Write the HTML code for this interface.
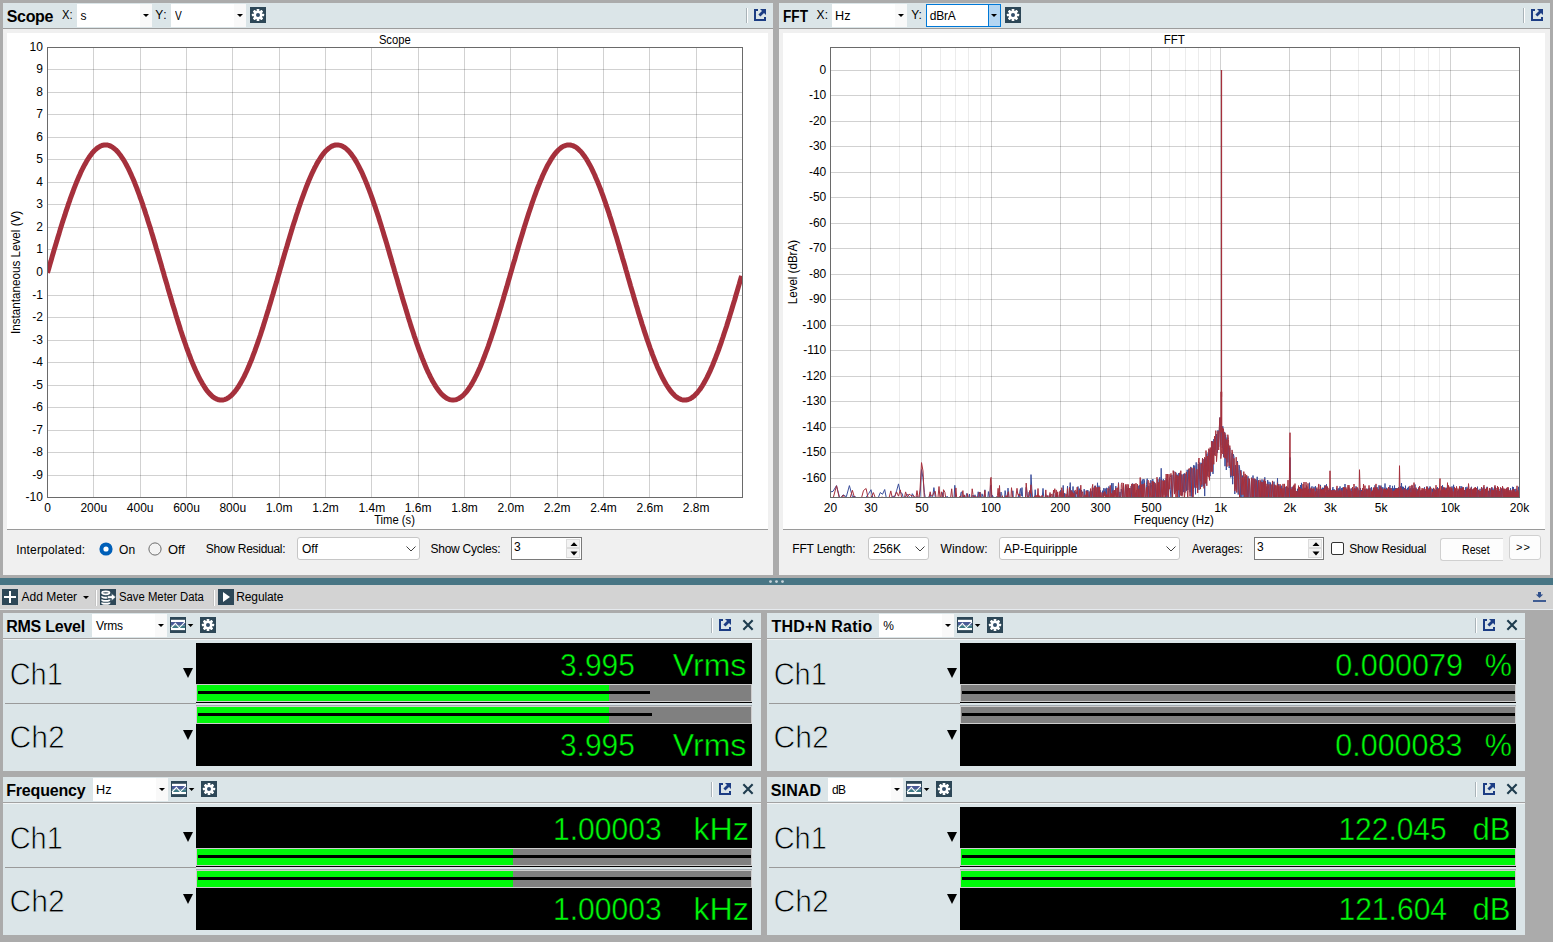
<!DOCTYPE html>
<html><head><meta charset="utf-8"><title>APx</title>
<style>
html,body{margin:0;padding:0;}
body{width:1553px;height:942px;overflow:hidden;background:#ababab;position:relative;font-family:"Liberation Sans", sans-serif;font-size:12px;color:#000;}
.a{position:absolute;}
.t{position:absolute;white-space:nowrap;line-height:1;}
.hd{background:#dbe5e8;}
.b{font-weight:bold;font-size:15px;}
.cb{position:absolute;background:#fff;}
.cb i{position:absolute;right:0;top:0;bottom:0;width:12px;background:#f9f9f9;}
.cb b{position:absolute;right:3.5px;top:50%;margin-top:-1.5px;width:0;height:0;border-left:3px solid transparent;border-right:3px solid transparent;border-top:3.4px solid #000;}
.cb span{position:absolute;left:5px;top:50%;margin-top:-6px;line-height:1;font-size:12px;}
.w10{position:absolute;background:#fff;border:1px solid #c6c6c6;border-radius:3px;box-sizing:border-box;}
.w10 span{position:absolute;left:4px;top:4px;line-height:1;font-size:12px;}
.sp{position:absolute;background:#fff;border:1px solid #7a7a7a;box-sizing:border-box;}
.sp span{position:absolute;left:2px;top:3px;line-height:1;font-size:12px;}
.sep{position:absolute;width:1px;background:#a9b3b8;box-shadow:1px 0 0 #fff;}
svg{position:absolute;left:0;top:0;overflow:visible;}
</style></head><body>

<div class="a" style="left:3px;top:3px;width:770px;height:25px;background:#dbe5e8;"></div>
<div class="a" style="left:3px;top:28px;width:770px;height:1px;background:#9c9c9c;"></div>
<div class="a" style="left:3px;top:29px;width:770px;height:546px;background:#f0f0f0;"></div>
<div class="a" style="left:7px;top:33px;width:761px;height:496px;background:#fff;"></div>
<div class="a" style="left:7px;top:529px;width:761px;height:1px;background:#9a9a9a;"></div>
<div class="a" style="left:779px;top:3px;width:771px;height:25px;background:#dbe5e8;"></div>
<div class="a" style="left:779px;top:28px;width:771px;height:1px;background:#9c9c9c;"></div>
<div class="a" style="left:779px;top:29px;width:771px;height:546px;background:#f0f0f0;"></div>
<div class="a" style="left:783px;top:33px;width:762px;height:496px;background:#fff;"></div>
<div class="a" style="left:783px;top:529px;width:762px;height:1px;background:#9a9a9a;"></div>
<div class="t" style="left:6.76px;top:8.7px;font-size:16px;letter-spacing:-0.335px;font-weight:bold;">Scope</div>
<div class="t" style="left:61.65px;top:9px;font-size:12px;transform-origin:0 0;transform:scaleX(0.9309);">X:</div>
<div class="cb" style="left:77px;top:4px;width:75px;height:23px;"><i></i><b></b></div>
<div class="t" style="left:80.47px;top:10px;font-size:12px;letter-spacing:-0.050px;">s</div>
<div class="t" style="left:155.36px;top:9px;font-size:12px;letter-spacing:0.440px;">Y:</div>
<div class="cb" style="left:171px;top:4px;width:75px;height:23px;"><i></i><b></b></div>
<div class="t" style="left:175.27px;top:10px;font-size:12px;transform-origin:0 0;transform:scaleX(0.8460);">V</div>
<svg style="left:250px;top:7px" width="16" height="16" viewBox="0 0 16 16"><rect width="16" height="16" fill="#2d4757"/><g transform="translate(8 8)" fill="#fff"><circle r="4.3"/><rect x="-1.35" y="-6.1" width="2.7" height="3.4" rx="0.5" transform="rotate(0)"/><rect x="-1.35" y="-6.1" width="2.7" height="3.4" rx="0.5" transform="rotate(45)"/><rect x="-1.35" y="-6.1" width="2.7" height="3.4" rx="0.5" transform="rotate(90)"/><rect x="-1.35" y="-6.1" width="2.7" height="3.4" rx="0.5" transform="rotate(135)"/><rect x="-1.35" y="-6.1" width="2.7" height="3.4" rx="0.5" transform="rotate(180)"/><rect x="-1.35" y="-6.1" width="2.7" height="3.4" rx="0.5" transform="rotate(225)"/><rect x="-1.35" y="-6.1" width="2.7" height="3.4" rx="0.5" transform="rotate(270)"/><rect x="-1.35" y="-6.1" width="2.7" height="3.4" rx="0.5" transform="rotate(315)"/><circle r="2.0" fill="#34506c"/></g></svg>
<div class="sep" style="left:746px;top:8px;height:15px"></div>
<svg style="left:754px;top:9px" width="12" height="12" viewBox="0 0 12 12"><path d="M0 0H4V2H2V10H10V8H12V12H0Z" fill="#1c3d84"/><path d="M6 0H12V6L10 4L6.4 7.6L4.4 5.6L8 2Z" fill="#1c3d84"/></svg>
<div class="t" style="left:783.01px;top:8.7px;font-size:16px;transform-origin:0 0;transform:scaleX(0.8523);font-weight:bold;">FFT</div>
<div class="t" style="left:816.53px;top:9px;font-size:12px;letter-spacing:0.110px;">X:</div>
<div class="cb" style="left:832px;top:4px;width:75px;height:23px;"><i></i><b></b></div>
<div class="t" style="left:835.48px;top:10px;font-size:12px;transform-origin:0 0;transform:scaleX(1.0578);">Hz</div>
<div class="t" style="left:911.16px;top:9px;font-size:12px;letter-spacing:-0.060px;">Y:</div>
<div class="cb" style="left:926px;top:4px;width:75px;height:23px;box-sizing:border-box;border:1px solid #0078d7;"><i style="background:#b4d6f2;border-left:1px solid #0078d7;width:11px"></i><b style="right:2.6px"></b></div>
<div class="t" style="left:929.82px;top:10px;font-size:12px;letter-spacing:-0.220px;">dBrA</div>
<svg style="left:1005px;top:7px" width="16" height="16" viewBox="0 0 16 16"><rect width="16" height="16" fill="#2d4757"/><g transform="translate(8 8)" fill="#fff"><circle r="4.3"/><rect x="-1.35" y="-6.1" width="2.7" height="3.4" rx="0.5" transform="rotate(0)"/><rect x="-1.35" y="-6.1" width="2.7" height="3.4" rx="0.5" transform="rotate(45)"/><rect x="-1.35" y="-6.1" width="2.7" height="3.4" rx="0.5" transform="rotate(90)"/><rect x="-1.35" y="-6.1" width="2.7" height="3.4" rx="0.5" transform="rotate(135)"/><rect x="-1.35" y="-6.1" width="2.7" height="3.4" rx="0.5" transform="rotate(180)"/><rect x="-1.35" y="-6.1" width="2.7" height="3.4" rx="0.5" transform="rotate(225)"/><rect x="-1.35" y="-6.1" width="2.7" height="3.4" rx="0.5" transform="rotate(270)"/><rect x="-1.35" y="-6.1" width="2.7" height="3.4" rx="0.5" transform="rotate(315)"/><circle r="2.0" fill="#34506c"/></g></svg>
<div class="sep" style="left:1523px;top:8px;height:15px"></div>
<svg style="left:1531px;top:9px" width="12" height="12" viewBox="0 0 12 12"><path d="M0 0H4V2H2V10H10V8H12V12H0Z" fill="#1c3d84"/><path d="M6 0H12V6L10 4L6.4 7.6L4.4 5.6L8 2Z" fill="#1c3d84"/></svg>
<svg width="1553" height="942" viewBox="0 0 1553 942" font-family='"Liberation Sans", sans-serif' font-size="12" fill="#000">
<path d="M93.5 47.5V497.5M140.5 47.5V497.5M186.5 47.5V497.5M232.5 47.5V497.5M279.5 47.5V497.5M325.5 47.5V497.5M371.5 47.5V497.5M418.5 47.5V497.5M464.5 47.5V497.5M510.5 47.5V497.5M557.5 47.5V497.5M603.5 47.5V497.5M649.5 47.5V497.5M696.5 47.5V497.5M47.5 69.5H742.5M47.5 92.5H742.5M47.5 114.5H742.5M47.5 137.5H742.5M47.5 159.5H742.5M47.5 182.5H742.5M47.5 204.5H742.5M47.5 227.5H742.5M47.5 249.5H742.5M47.5 272.5H742.5M47.5 295.5H742.5M47.5 317.5H742.5M47.5 340.5H742.5M47.5 362.5H742.5M47.5 385.5H742.5M47.5 407.5H742.5M47.5 430.5H742.5M47.5 452.5H742.5M47.5 475.5H742.5" stroke="rgba(0,0,0,0.18)" stroke-width="1" fill="none"/>
<clipPath id="c1"><rect x="47.5" y="47.5" width="695.0" height="450.0"/></clipPath>
<polyline clip-path="url(#c1)" points="47.5,272.8 48.7,268.8 49.8,264.8 51.0,260.8 52.1,256.8 53.3,252.8 54.4,248.9 55.6,245.0 56.8,241.1 57.9,237.2 59.1,233.4 60.2,229.6 61.4,225.8 62.5,222.1 63.7,218.5 64.9,214.9 66.0,211.3 67.2,207.9 68.3,204.4 69.5,201.1 70.6,197.8 71.8,194.6 73.0,191.5 74.1,188.4 75.3,185.4 76.4,182.6 77.6,179.8 78.7,177.1 79.9,174.5 81.0,171.9 82.2,169.5 83.4,167.2 84.5,165.0 85.7,162.9 86.8,160.9 88.0,159.0 89.1,157.3 90.3,155.6 91.5,154.1 92.6,152.6 93.8,151.3 94.9,150.1 96.1,149.1 97.2,148.1 98.4,147.3 99.6,146.6 100.7,146.0 101.9,145.5 103.0,145.2 104.2,145.0 105.3,144.9 106.5,145.0 107.7,145.1 108.8,145.4 110.0,145.9 111.1,146.4 112.3,147.1 113.4,147.9 114.6,148.8 115.8,149.8 116.9,151.0 118.1,152.3 119.2,153.7 120.4,155.2 121.5,156.8 122.7,158.6 123.9,160.4 125.0,162.4 126.2,164.5 127.3,166.6 128.5,168.9 129.6,171.3 130.8,173.8 131.9,176.4 133.1,179.1 134.3,181.8 135.4,184.7 136.6,187.6 137.7,190.7 138.9,193.8 140.0,197.0 141.2,200.2 142.4,203.6 143.5,207.0 144.7,210.4 145.8,214.0 147.0,217.5 148.1,221.2 149.3,224.9 150.5,228.6 151.6,232.4 152.8,236.2 153.9,240.1 155.1,243.9 156.2,247.9 157.4,251.8 158.6,255.8 159.7,259.7 160.9,263.7 162.0,267.7 163.2,271.7 164.3,275.7 165.5,279.7 166.7,283.7 167.8,287.7 169.0,291.7 170.1,295.6 171.3,299.5 172.4,303.4 173.6,307.3 174.8,311.1 175.9,314.9 177.1,318.7 178.2,322.4 179.4,326.0 180.5,329.7 181.7,333.2 182.8,336.7 184.0,340.1 185.2,343.5 186.3,346.8 187.5,350.0 188.6,353.1 189.8,356.2 190.9,359.2 192.1,362.1 193.3,364.9 194.4,367.6 195.6,370.2 196.7,372.7 197.9,375.2 199.0,377.5 200.2,379.7 201.4,381.8 202.5,383.8 203.7,385.7 204.8,387.5 206.0,389.2 207.1,390.8 208.3,392.2 209.5,393.5 210.6,394.7 211.8,395.8 212.9,396.8 214.1,397.6 215.2,398.3 216.4,398.9 217.6,399.4 218.7,399.8 219.9,400.0 221.0,400.1 222.2,400.0 223.3,399.9 224.5,399.6 225.7,399.2 226.8,398.7 228.0,398.0 229.1,397.2 230.3,396.3 231.4,395.3 232.6,394.2 233.7,392.9 234.9,391.5 236.1,390.0 237.2,388.4 238.4,386.7 239.5,384.8 240.7,382.9 241.8,380.8 243.0,378.6 244.2,376.4 245.3,374.0 246.5,371.5 247.6,369.0 248.8,366.3 249.9,363.5 251.1,360.7 252.3,357.7 253.4,354.7 254.6,351.6 255.7,348.4 256.9,345.2 258.0,341.9 259.2,338.5 260.4,335.0 261.5,331.5 262.7,327.9 263.8,324.3 265.0,320.6 266.1,316.9 267.3,313.1 268.5,309.3 269.6,305.4 270.8,301.6 271.9,297.6 273.1,293.7 274.2,289.8 275.4,285.8 276.6,281.8 277.7,277.8 278.9,273.8 280.0,269.8 281.2,265.8 282.3,261.8 283.5,257.8 284.6,253.9 285.8,249.9 287.0,246.0 288.1,242.1 289.3,238.2 290.4,234.4 291.6,230.6 292.7,226.8 293.9,223.1 295.1,219.4 296.2,215.8 297.4,212.3 298.5,208.8 299.7,205.3 300.8,202.0 302.0,198.7 303.2,195.4 304.3,192.3 305.5,189.2 306.6,186.2 307.8,183.3 308.9,180.5 310.1,177.8 311.3,175.1 312.4,172.6 313.6,170.2 314.7,167.8 315.9,165.6 317.0,163.4 318.2,161.4 319.4,159.5 320.5,157.7 321.7,156.0 322.8,154.4 324.0,153.0 325.1,151.6 326.3,150.4 327.5,149.3 328.6,148.3 329.8,147.5 330.9,146.7 332.1,146.1 333.2,145.6 334.4,145.3 335.6,145.0 336.7,144.9 337.9,144.9 339.0,145.1 340.2,145.4 341.3,145.7 342.5,146.3 343.6,146.9 344.8,147.7 346.0,148.5 347.1,149.6 348.3,150.7 349.4,151.9 350.6,153.3 351.7,154.8 352.9,156.4 354.1,158.1 355.2,159.9 356.4,161.9 357.5,163.9 358.7,166.1 359.8,168.3 361.0,170.7 362.2,173.1 363.3,175.7 364.5,178.4 365.6,181.1 366.8,183.9 367.9,186.9 369.1,189.9 370.3,193.0 371.4,196.1 372.6,199.4 373.7,202.7 374.9,206.1 376.0,209.5 377.2,213.0 378.4,216.6 379.5,220.2 380.7,223.9 381.8,227.6 383.0,231.4 384.1,235.2 385.3,239.1 386.5,242.9 387.6,246.8 388.8,250.8 389.9,254.7 391.1,258.7 392.2,262.7 393.4,266.7 394.5,270.7 395.7,274.7 396.9,278.7 398.0,282.7 399.2,286.7 400.3,290.6 401.5,294.6 402.6,298.5 403.8,302.4 405.0,306.3 406.1,310.1 407.3,313.9 408.4,317.7 409.6,321.4 410.7,325.1 411.9,328.7 413.1,332.3 414.2,335.8 415.4,339.2 416.5,342.6 417.7,345.9 418.8,349.2 420.0,352.3 421.2,355.4 422.3,358.4 423.5,361.3 424.6,364.1 425.8,366.9 426.9,369.5 428.1,372.1 429.3,374.5 430.4,376.9 431.6,379.1 432.7,381.3 433.9,383.3 435.0,385.2 436.2,387.1 437.4,388.8 438.5,390.4 439.7,391.8 440.8,393.2 442.0,394.4 443.1,395.5 444.3,396.5 445.4,397.4 446.6,398.2 447.8,398.8 448.9,399.3 450.1,399.7 451.2,399.9 452.4,400.1 453.5,400.1 454.7,399.9 455.9,399.7 457.0,399.3 458.2,398.8 459.3,398.2 460.5,397.4 461.6,396.6 462.8,395.6 464.0,394.5 465.1,393.2 466.3,391.9 467.4,390.4 468.6,388.8 469.7,387.1 470.9,385.3 472.1,383.4 473.2,381.4 474.4,379.2 475.5,377.0 476.7,374.6 477.8,372.2 479.0,369.6 480.2,367.0 481.3,364.3 482.5,361.4 483.6,358.5 484.8,355.5 485.9,352.4 487.1,349.3 488.3,346.0 489.4,342.7 490.6,339.4 491.7,335.9 492.9,332.4 494.0,328.9 495.2,325.2 496.3,321.6 497.5,317.9 498.7,314.1 499.8,310.3 501.0,306.4 502.1,302.6 503.3,298.7 504.4,294.7 505.6,290.8 506.8,286.8 507.9,282.8 509.1,278.8 510.2,274.8 511.4,270.8 512.5,266.8 513.7,262.8 514.9,258.9 516.0,254.9 517.2,250.9 518.3,247.0 519.5,243.1 520.6,239.2 521.8,235.4 523.0,231.5 524.1,227.8 525.3,224.1 526.4,220.4 527.6,216.7 528.7,213.2 529.9,209.7 531.1,206.2 532.2,202.8 533.4,199.5 534.5,196.3 535.7,193.1 536.8,190.0 538.0,187.0 539.2,184.1 540.3,181.2 541.5,178.5 542.6,175.8 543.8,173.2 544.9,170.8 546.1,168.4 547.2,166.1 548.4,164.0 549.6,161.9 550.7,160.0 551.9,158.2 553.0,156.4 554.2,154.8 555.3,153.4 556.5,152.0 557.7,150.7 558.8,149.6 560.0,148.6 561.1,147.7 562.3,146.9 563.4,146.3 564.6,145.8 565.8,145.4 566.9,145.1 568.1,145.0 569.2,144.9 570.4,145.0 571.5,145.3 572.7,145.6 573.9,146.1 575.0,146.7 576.2,147.4 577.3,148.3 578.5,149.3 579.6,150.4 580.8,151.6 582.0,152.9 583.1,154.4 584.3,156.0 585.4,157.6 586.6,159.4 587.7,161.3 588.9,163.4 590.1,165.5 591.2,167.7 592.4,170.1 593.5,172.5 594.7,175.0 595.8,177.7 597.0,180.4 598.1,183.2 599.3,186.1 600.5,189.1 601.6,192.2 602.8,195.3 603.9,198.5 605.1,201.8 606.2,205.2 607.4,208.6 608.6,212.1 609.7,215.7 610.9,219.3 612.0,222.9 613.2,226.7 614.3,230.4 615.5,234.2 616.7,238.1 617.8,241.9 619.0,245.8 620.1,249.7 621.3,253.7 622.4,257.7 623.6,261.6 624.8,265.6 625.9,269.6 627.1,273.6 628.2,277.6 629.4,281.6 630.5,285.6 631.7,289.6 632.9,293.6 634.0,297.5 635.2,301.4 636.3,305.3 637.5,309.1 638.6,313.0 639.8,316.7 641.0,320.5 642.1,324.2 643.3,327.8 644.4,331.4 645.6,334.9 646.7,338.3 647.9,341.7 649.1,345.1 650.2,348.3 651.4,351.5 652.5,354.6 653.7,357.6 654.8,360.6 656.0,363.4 657.1,366.2 658.3,368.9 659.5,371.4 660.6,373.9 661.8,376.3 662.9,378.6 664.1,380.7 665.2,382.8 666.4,384.8 667.6,386.6 668.7,388.3 669.9,390.0 671.0,391.5 672.2,392.8 673.3,394.1 674.5,395.3 675.7,396.3 676.8,397.2 678.0,398.0 679.1,398.6 680.3,399.2 681.4,399.6 682.6,399.9 683.8,400.0 684.9,400.1 686.1,400.0 687.2,399.8 688.4,399.4 689.5,399.0 690.7,398.4 691.9,397.7 693.0,396.8 694.2,395.9 695.3,394.8 696.5,393.6 697.6,392.3 698.8,390.8 700.0,389.3 701.1,387.6 702.3,385.8 703.4,383.9 704.6,381.9 705.7,379.8 706.9,377.6 708.0,375.3 709.2,372.8 710.4,370.3 711.5,367.7 712.7,365.0 713.8,362.2 715.0,359.3 716.1,356.3 717.3,353.3 718.5,350.1 719.6,346.9 720.8,343.6 721.9,340.3 723.1,336.8 724.2,333.3 725.4,329.8 726.6,326.2 727.7,322.5 728.9,318.8 730.0,315.1 731.2,311.3 732.3,307.5 733.5,303.6 734.7,299.7 735.8,295.8 737.0,291.8 738.1,287.9 739.3,283.9 740.4,279.9 741.6,275.9" stroke="#a5303c" stroke-width="5" fill="none" stroke-linejoin="round"/>
<rect x="47.5" y="47.5" width="695.0" height="450.0" fill="none" stroke="#6a6a6a" stroke-width="1"/>
<text x="42.9" y="50.9" text-anchor="end">10</text>
<text x="42.9" y="72.9" text-anchor="end">9</text>
<text x="42.9" y="95.9" text-anchor="end">8</text>
<text x="42.9" y="117.9" text-anchor="end">7</text>
<text x="42.9" y="140.9" text-anchor="end">6</text>
<text x="42.9" y="162.9" text-anchor="end">5</text>
<text x="42.9" y="185.9" text-anchor="end">4</text>
<text x="42.9" y="207.9" text-anchor="end">3</text>
<text x="42.9" y="230.9" text-anchor="end">2</text>
<text x="42.9" y="252.9" text-anchor="end">1</text>
<text x="42.9" y="275.9" text-anchor="end">0</text>
<text x="42.9" y="298.9" text-anchor="end">-1</text>
<text x="42.9" y="320.9" text-anchor="end">-2</text>
<text x="42.9" y="343.9" text-anchor="end">-3</text>
<text x="42.9" y="365.9" text-anchor="end">-4</text>
<text x="42.9" y="388.9" text-anchor="end">-5</text>
<text x="42.9" y="410.9" text-anchor="end">-6</text>
<text x="42.9" y="433.9" text-anchor="end">-7</text>
<text x="42.9" y="455.9" text-anchor="end">-8</text>
<text x="42.9" y="478.9" text-anchor="end">-9</text>
<text x="42.9" y="500.9" text-anchor="end">-10</text>
<text x="47.5" y="511.6" text-anchor="middle">0</text>
<text x="93.8" y="511.6" text-anchor="middle">200u</text>
<text x="140.2" y="511.6" text-anchor="middle">400u</text>
<text x="186.5" y="511.6" text-anchor="middle">600u</text>
<text x="232.8" y="511.6" text-anchor="middle">800u</text>
<text x="279.2" y="511.6" text-anchor="middle">1.0m</text>
<text x="325.5" y="511.6" text-anchor="middle">1.2m</text>
<text x="371.8" y="511.6" text-anchor="middle">1.4m</text>
<text x="418.2" y="511.6" text-anchor="middle">1.6m</text>
<text x="464.5" y="511.6" text-anchor="middle">1.8m</text>
<text x="510.8" y="511.6" text-anchor="middle">2.0m</text>
<text x="557.2" y="511.6" text-anchor="middle">2.2m</text>
<text x="603.5" y="511.6" text-anchor="middle">2.4m</text>
<text x="649.8" y="511.6" text-anchor="middle">2.6m</text>
<text x="696.2" y="511.6" text-anchor="middle">2.8m</text>
<text x="378.90" y="43.8" font-size="12" fill="#000" textLength="31.79" lengthAdjust="spacingAndGlyphs">Scope</text>
<text x="374.18" y="524" font-size="12" fill="#000" textLength="40.71" lengthAdjust="spacingAndGlyphs">Time (s)</text>
<text transform="translate(20 333.95) rotate(-90)" font-size="12" textLength="123.15" lengthAdjust="spacingAndGlyphs">Instantaneous Level (V)</text>
<path d="M899.5 47.5V497.5M940.5 47.5V497.5M955.5 47.5V497.5M968.5 47.5V497.5M980.5 47.5V497.5M1129.5 47.5V497.5M1169.5 47.5V497.5M1185.5 47.5V497.5M1198.5 47.5V497.5M1210.5 47.5V497.5M1358.5 47.5V497.5M1399.5 47.5V497.5M1414.5 47.5V497.5M1428.5 47.5V497.5M1439.5 47.5V497.5" stroke="rgba(0,0,0,0.075)" stroke-width="1" fill="none"/>
<path d="M870.5 47.5V497.5M921.5 47.5V497.5M991.5 47.5V497.5M1060.5 47.5V497.5M1100.5 47.5V497.5M1151.5 47.5V497.5M1220.5 47.5V497.5M1289.5 47.5V497.5M1330.5 47.5V497.5M1381.5 47.5V497.5M1450.5 47.5V497.5M830.5 70.5H1519.5M830.5 95.5H1519.5M830.5 121.5H1519.5M830.5 146.5H1519.5M830.5 172.5H1519.5M830.5 197.5H1519.5M830.5 223.5H1519.5M830.5 248.5H1519.5M830.5 274.5H1519.5M830.5 299.5H1519.5M830.5 325.5H1519.5M830.5 350.5H1519.5M830.5 376.5H1519.5M830.5 401.5H1519.5M830.5 427.5H1519.5M830.5 452.5H1519.5M830.5 478.5H1519.5" stroke="rgba(0,0,0,0.18)" stroke-width="1" fill="none"/>
<clipPath id="c2"><rect x="830.5" y="47.5" width="689.0" height="450.0"/></clipPath>
<g clip-path="url(#c2)" fill="none" stroke-width="1" stroke-linejoin="round">
<path d="M830.5 491.9L833.0 491.4L836.5 485.6L839.9 498.7L843.2 494.8L846.3 496.8L849.4 485.6L852.4 496.7L855.3 496.5L858.1 500.5L860.8 500.2L863.5 500.5L866.1 497.3L868.6 493.7L871.0 489.7L873.4 500.5L875.8 500.0L878.1 498.1L880.3 492.5L882.5 494.3L884.7 489.5L886.8 500.5L888.8 499.8L890.8 500.5L892.8 496.2L894.7 496.6L896.6 490.8L898.5 483.9L900.3 492.5L902.1 493.4L903.9 500.1L905.6 496.2L907.3 494.3L909.0 496.2L910.7 500.5L912.3 493.7L913.9 496.2L915.5 498.1L917.0 496.3L918.5 497.8L920.0 496.9L921.5 469.5L923.0 477.9L924.4 492.7L925.8 500.5L927.2 500.5L928.6 497.8L930.2 494.0L931.0 497.8L932.6 497.3L933.9 487.6L935.2 496.5L936.5 500.5L937.7 500.5L939.0 497.5L940.2 500.5L941.4 500.5L942.9 492.4L943.5 500.5L944.9 497.9L946.1 497.3L947.2 496.2L948.5 500.5L949.1 500.5L950.6 498.0L951.7 500.5L952.7 500.5L954.0 498.4L954.8 485.3L955.9 500.5L956.9 500.5L958.2 498.8L959.0 499.3L960.0 500.5L961.0 492.3L961.8 492.0L962.9 500.2L963.9 500.5L964.5 495.9L965.8 498.5L966.6 493.5L967.4 494.5L968.6 500.5L969.5 494.0L970.1 500.5L971.3 498.7L972.2 500.5L973.0 495.0L973.9 499.8L975.0 494.8L975.8 500.5L976.5 500.3L977.1 500.5L978.2 491.8L979.2 496.9L980.0 492.0L980.6 500.5L981.4 500.5L982.0 493.8L982.8 496.2L983.8 500.5L984.9 489.8L985.5 500.5L986.2 500.5L987.0 498.3L987.6 500.5L988.4 491.6L989.0 495.3L989.8 498.5L990.5 486.1L991.1 484.9L991.9 500.5L992.5 495.4L993.2 497.1L994.0 500.5L994.6 497.8L995.4 500.5L996.0 499.1L996.8 496.5L997.5 497.5L998.1 497.9L998.9 499.7L999.5 492.3L1000.2 498.6L1001.0 492.1L1001.6 493.5L1002.4 500.5L1003.0 498.8L1003.8 500.5L1004.5 498.3L1005.1 490.6L1005.9 495.5L1006.5 497.2L1007.2 500.5L1008.0 488.1L1008.6 495.3L1009.4 500.5L1010.0 500.5L1010.8 498.7L1011.5 500.5L1012.1 500.5L1012.9 490.8L1013.5 500.5L1014.2 500.5L1015.0 500.5L1015.6 500.5L1016.4 500.5L1017.0 500.5L1017.8 500.5L1018.5 494.7L1019.1 498.8L1019.9 491.2L1020.5 488.5L1021.2 496.1L1022.0 487.6L1022.6 496.6L1023.4 499.3L1024.0 500.5L1024.8 500.5L1025.5 497.4L1026.2 487.3L1026.8 491.1L1027.5 500.5L1028.2 500.5L1029.0 492.0L1029.7 492.8L1030.3 500.5L1031.0 474.6L1031.8 488.9L1032.5 496.9L1033.2 496.9L1033.8 500.5L1034.5 500.5L1035.2 489.7L1036.0 500.5L1036.7 497.4L1037.3 498.3L1038.0 500.5L1038.8 496.5L1039.5 500.5L1040.2 500.5L1040.8 496.5L1041.5 500.5L1042.2 497.9L1043.0 488.4L1043.7 496.8L1044.3 500.5L1045.0 500.5L1045.8 494.5L1046.5 498.1L1047.2 500.5L1047.8 495.5L1048.5 500.5L1049.2 500.5L1050.0 494.4L1050.7 496.1L1051.3 500.5L1052.0 500.5L1052.8 500.5L1053.5 492.4L1054.2 498.5L1054.8 497.1L1055.5 500.5L1056.2 493.0L1057.0 500.5L1057.7 495.2L1058.3 500.5L1059.0 497.4L1059.8 500.5L1060.5 490.4L1061.2 500.5L1061.8 500.5L1062.5 500.5L1063.2 485.4L1064.0 500.5L1064.7 493.1L1065.3 500.5L1066.0 497.3L1066.8 500.5L1067.5 486.1L1068.2 500.5L1068.8 495.8L1069.5 500.5L1070.2 482.6L1071.0 500.5L1071.7 490.5L1072.3 500.5L1073.0 486.5L1073.8 500.5L1074.5 490.9L1075.2 500.5L1075.8 492.2L1076.5 500.5L1077.2 500.5L1078.0 486.5L1078.7 500.5L1079.3 488.6L1080.0 496.3L1080.8 500.5L1081.5 490.1L1082.2 495.4L1082.8 496.3L1083.5 500.5L1084.2 489.1L1085.0 500.5L1085.7 500.5L1086.3 490.7L1087.0 498.0L1087.8 490.0L1088.5 500.5L1089.2 491.5L1089.8 500.5L1090.5 493.9L1091.2 491.3L1092.0 500.5L1092.7 487.9L1093.3 500.5L1094.0 500.5L1094.8 485.8L1095.5 500.5L1096.2 491.9L1096.8 500.5L1097.5 482.8L1098.2 500.5L1099.0 485.7L1099.7 500.5L1100.3 490.3L1101.0 496.9L1101.8 500.5L1102.5 490.7L1103.2 500.5L1103.8 488.1L1104.5 495.7L1105.2 488.5L1106.0 500.1L1106.7 487.8L1107.3 500.5L1108.0 500.5L1108.8 486.5L1109.5 488.4L1110.2 500.5L1110.8 500.5L1111.5 483.3L1112.2 496.6L1113.0 483.1L1113.7 500.5L1114.3 490.9L1115.0 495.4L1115.8 486.1L1116.5 500.5L1117.2 493.6L1117.8 500.5L1118.5 482.6L1119.2 500.5L1120.0 492.0L1120.7 500.5L1121.3 489.0L1122.0 493.0L1122.8 500.5L1123.5 483.6L1124.2 500.5L1124.8 500.5L1125.5 487.2L1126.2 485.8L1127.0 500.5L1127.7 487.9L1128.3 500.5L1129.0 500.5L1129.8 488.2L1130.5 500.5L1131.2 486.0L1131.8 500.5L1132.5 483.6L1133.2 500.5L1134.0 485.2L1134.7 500.5L1135.3 492.8L1136.0 500.5L1136.8 490.0L1137.5 500.5L1138.2 485.7L1138.8 499.7L1139.5 485.3L1140.2 498.3L1141.0 481.3L1141.7 498.9L1142.3 479.5L1143.0 500.5L1143.8 479.0L1144.5 481.0L1145.2 500.5L1145.8 500.5L1146.5 484.3L1147.2 478.6L1148.0 500.5L1148.7 485.8L1149.3 500.5L1150.0 496.0L1150.8 480.2L1151.5 484.6L1152.2 500.5L1152.8 479.1L1153.5 500.5L1154.2 481.9L1155.0 500.5L1155.7 484.3L1156.3 500.5L1157.0 500.5L1157.8 479.2L1158.5 500.5L1159.2 479.8L1159.8 477.3L1160.5 500.5L1161.2 468.3L1162.0 500.5L1162.7 495.6L1163.3 479.2L1164.0 494.8L1164.8 480.9L1165.5 497.6L1166.2 478.1L1166.8 500.5L1167.5 479.7L1168.2 500.5L1169.0 482.7L1169.7 477.7L1170.3 489.9L1171.0 498.9L1171.8 475.1L1172.5 497.3L1173.2 476.1L1173.8 471.2L1174.5 489.6L1175.2 492.5L1176.0 472.7L1176.7 491.1L1177.3 474.7L1178.0 500.5L1178.8 473.0L1179.5 500.5L1180.2 472.9L1180.8 491.8L1181.5 474.5L1182.2 495.2L1183.0 474.4L1183.7 492.1L1184.3 473.3L1185.0 492.6L1185.8 473.8L1186.5 490.7L1187.2 469.8L1187.8 490.0L1188.5 469.5L1189.2 471.7L1190.0 492.2L1190.7 466.9L1191.3 496.6L1192.0 468.5L1192.8 497.0L1193.5 465.3L1194.2 487.6L1194.8 465.5L1195.5 494.3L1196.2 462.4L1197.0 485.6L1197.7 485.1L1198.3 464.0L1199.0 489.9L1199.8 462.5L1200.5 481.3L1201.2 462.9L1201.8 486.9L1202.5 458.0L1203.2 486.1L1204.0 459.0L1204.7 496.1L1205.3 458.3L1206.0 483.3L1206.8 453.8L1207.5 475.7L1208.2 452.5L1208.8 471.6L1209.5 449.7L1210.2 476.1L1211.0 448.1L1211.7 470.7L1212.3 441.2L1213.0 473.9L1213.8 439.1L1214.5 454.9L1215.2 437.5L1215.8 449.8L1216.5 434.0L1217.2 453.0L1218.0 430.2L1218.7 446.9L1219.3 430.8L1220.0 417.5L1220.8 445.0L1221.5 426.3L1222.2 448.0L1222.8 426.2L1223.5 456.8L1224.2 431.9L1225.0 466.2L1225.7 434.7L1226.3 470.0L1227.0 437.5L1227.8 462.4L1228.5 444.0L1229.2 468.0L1229.8 447.8L1230.5 477.2L1231.2 477.2L1232.0 453.2L1232.7 484.2L1233.3 454.2L1234.0 456.6L1234.8 494.0L1235.5 465.0L1236.2 489.3L1236.8 489.8L1237.5 461.0L1238.2 494.5L1239.0 465.1L1239.7 468.9L1240.3 500.5L1241.0 470.2L1241.8 498.9L1242.5 475.6L1243.2 500.5L1243.8 500.5L1244.5 477.4L1245.2 476.4L1246.0 500.5L1246.7 477.5L1247.3 500.5L1248.0 476.3L1248.8 500.5L1249.5 479.0L1250.2 500.5L1250.8 500.5L1251.5 477.8L1252.2 500.5L1253.0 475.5L1253.7 500.5L1254.3 479.5L1255.0 500.3L1255.8 479.2L1256.5 500.5L1257.2 476.8L1257.8 500.5L1258.5 480.4L1259.2 500.5L1260.0 483.0L1260.7 480.9L1261.3 500.5L1262.0 479.4L1262.8 500.5L1263.5 480.7L1264.2 499.1L1264.8 477.3L1265.5 500.5L1266.2 486.5L1267.0 500.5L1267.7 480.1L1268.3 500.5L1269.0 481.8L1269.8 500.5L1270.5 482.6L1271.2 500.5L1271.8 500.5L1272.5 482.8L1273.2 500.5L1274.0 481.7L1274.7 500.5L1275.3 485.5L1276.0 486.5L1276.8 500.5L1277.5 478.2L1278.2 500.5L1278.8 484.0L1279.5 500.5L1280.2 486.7L1281.0 500.5L1281.7 485.7L1282.3 500.5L1283.0 488.4L1283.8 500.5L1284.5 486.9L1285.2 500.5L1285.8 486.8L1286.5 500.5L1287.2 487.1L1288.0 500.5L1288.7 487.9L1289.3 500.5L1290.0 457.5L1290.5 500.5L1291.0 489.5L1291.5 500.5L1292.0 486.9L1292.5 500.5L1293.0 488.5L1293.5 500.5L1294.0 486.0L1294.5 500.5L1295.0 488.2L1295.5 500.5L1296.0 500.5L1296.5 491.0L1297.0 500.5L1297.5 488.8L1298.0 500.5L1298.5 488.6L1299.0 500.5L1299.5 489.9L1300.0 500.5L1300.5 485.0L1301.0 500.5L1301.5 482.9L1302.0 500.5L1302.5 488.7L1303.0 500.5L1303.5 489.2L1304.0 488.8L1304.5 500.5L1305.0 487.7L1305.5 500.5L1306.0 500.5L1306.5 485.5L1307.0 500.5L1307.5 490.3L1308.0 500.5L1308.5 489.5L1309.0 500.5L1309.5 482.7L1310.0 500.5L1310.5 488.9L1311.0 500.5L1311.5 489.4L1312.0 486.3L1312.5 500.5L1313.0 492.8L1313.5 500.5L1314.0 486.8L1314.5 500.5L1315.0 500.5L1315.5 486.2L1316.0 489.5L1316.5 500.5L1317.0 490.9L1317.5 500.5L1318.0 488.7L1318.5 500.5L1319.0 489.1L1319.5 500.5L1320.0 500.5L1320.5 484.9L1321.0 500.5L1321.5 488.8L1322.0 500.5L1322.5 487.7L1323.0 500.5L1323.5 487.9L1324.0 500.5L1324.5 485.5L1325.0 500.5L1325.5 492.0L1326.0 500.5L1326.5 484.3L1327.0 500.5L1327.5 487.0L1328.0 500.5L1328.5 489.9L1329.0 500.5L1329.5 488.9L1330.0 500.5L1330.5 488.5L1331.0 500.5L1331.5 490.5L1332.0 500.5L1332.5 488.8L1333.0 487.1L1333.5 500.5L1334.0 489.1L1334.5 500.5L1335.0 500.5L1335.5 490.9L1336.0 500.5L1336.5 487.8L1337.0 490.3L1337.5 500.5L1338.0 488.9L1338.5 500.5L1339.0 488.0L1339.5 500.5L1340.0 486.4L1340.5 500.5L1341.0 500.5L1341.5 488.2L1342.0 500.5L1342.5 487.7L1343.0 489.5L1343.5 500.5L1344.0 490.5L1344.5 500.5L1345.0 484.0L1345.5 500.5L1346.0 500.5L1346.5 489.1L1347.0 500.5L1347.5 490.0L1348.0 500.5L1348.5 487.5L1349.0 487.3L1349.5 500.5L1350.0 489.6L1350.5 500.5L1351.0 500.5L1351.5 490.3L1352.0 488.1L1352.5 500.5L1353.0 489.3L1353.5 500.5L1354.0 500.5L1354.5 488.3L1355.0 500.5L1355.5 491.4L1356.0 486.3L1356.5 500.5L1357.0 488.0L1357.5 500.5L1358.0 488.5L1358.5 500.5L1359.0 500.5L1359.5 490.4L1360.0 500.5L1360.5 488.0L1361.0 500.5L1361.5 490.0L1362.0 500.5L1362.5 489.5L1363.0 500.5L1363.5 491.2L1364.0 500.5L1364.5 489.4L1365.0 489.6L1365.5 500.5L1366.0 489.2L1366.5 500.5L1367.0 488.7L1367.5 500.5L1368.0 500.5L1368.5 488.5L1369.0 490.2L1369.5 500.5L1370.0 487.8L1370.5 500.5L1371.0 500.5L1371.5 487.2L1372.0 490.8L1372.5 500.5L1373.0 500.5L1373.5 488.9L1374.0 500.5L1374.5 491.8L1375.0 485.3L1375.5 500.5L1376.0 488.2L1376.5 500.5L1377.0 487.0L1377.5 500.5L1378.0 489.2L1378.5 500.5L1379.0 485.3L1379.5 500.5L1380.0 487.4L1380.5 500.5L1381.0 485.6L1381.5 500.5L1382.0 487.2L1382.5 500.5L1383.0 487.5L1383.5 500.5L1384.0 491.5L1384.5 500.5L1385.0 483.5L1385.5 500.5L1386.0 500.5L1386.5 487.8L1387.0 489.7L1387.5 500.5L1388.0 500.5L1388.5 490.0L1389.0 500.5L1389.5 488.1L1390.0 485.2L1390.5 500.5L1391.0 488.1L1391.5 500.5L1392.0 500.5L1392.5 485.9L1393.0 500.5L1393.5 488.4L1394.0 500.5L1394.5 485.5L1395.0 500.5L1395.5 488.1L1396.0 500.5L1396.5 488.2L1397.0 500.5L1397.5 488.6L1398.0 500.5L1398.5 487.3L1399.0 500.5L1399.5 488.7L1400.0 500.5L1400.5 486.4L1401.0 500.5L1401.5 483.0L1402.0 500.5L1402.5 486.7L1403.0 500.5L1403.5 486.9L1404.0 500.5L1404.5 488.9L1405.0 500.5L1405.5 485.7L1406.0 500.5L1406.5 489.5L1407.0 500.5L1407.5 487.9L1408.0 500.5L1408.5 486.8L1409.0 500.5L1409.5 489.0L1410.0 500.5L1410.5 488.3L1411.0 488.6L1411.5 500.5L1412.0 485.9L1412.5 500.5L1413.0 488.4L1413.5 500.5L1414.0 488.3L1414.5 500.5L1415.0 484.5L1415.5 500.5L1416.0 488.6L1416.5 500.5L1417.0 489.3L1417.5 500.5L1418.0 489.3L1418.5 500.5L1419.0 487.0L1419.5 500.5L1420.0 500.5L1420.5 491.2L1421.0 491.8L1421.5 500.5L1422.0 490.1L1422.5 500.5L1423.0 490.3L1423.5 500.5L1424.0 500.5L1424.5 487.3L1425.0 500.5L1425.5 490.9L1426.0 500.5L1426.5 489.6L1427.0 486.4L1427.5 500.5L1428.0 489.1L1428.5 500.5L1429.0 487.9L1429.5 500.5L1430.0 486.4L1430.5 500.5L1431.0 488.4L1431.5 500.5L1432.0 500.5L1432.5 488.9L1433.0 500.5L1433.5 489.1L1434.0 500.5L1434.5 489.4L1435.0 500.5L1435.5 490.2L1436.0 500.5L1436.5 488.5L1437.0 500.5L1437.5 487.3L1438.0 500.5L1438.5 489.0L1439.0 488.5L1439.5 500.5L1440.0 500.5L1440.5 490.6L1441.0 500.5L1441.5 489.6L1442.0 500.5L1442.5 485.3L1443.0 490.0L1443.5 500.5L1444.0 487.8L1444.5 500.5L1445.0 488.3L1445.5 500.5L1446.0 487.6L1446.5 500.5L1447.0 500.5L1447.5 490.4L1448.0 500.5L1448.5 490.3L1449.0 500.5L1449.5 487.9L1450.0 490.1L1450.5 500.5L1451.0 489.7L1451.5 500.5L1452.0 486.4L1452.5 500.5L1453.0 500.5L1453.5 484.8L1454.0 487.7L1454.5 500.5L1455.0 490.8L1455.5 500.5L1456.0 489.7L1456.5 500.5L1457.0 500.5L1457.5 490.9L1458.0 500.5L1458.5 490.0L1459.0 489.9L1459.5 500.5L1460.0 488.2L1460.5 500.5L1461.0 486.1L1461.5 500.5L1462.0 486.7L1462.5 500.5L1463.0 500.5L1463.5 490.1L1464.0 500.5L1464.5 490.2L1465.0 500.5L1465.5 487.4L1466.0 500.5L1466.5 490.3L1467.0 486.8L1467.5 500.5L1468.0 500.5L1468.5 488.0L1469.0 500.5L1469.5 489.0L1470.0 500.5L1470.5 488.8L1471.0 500.5L1471.5 486.8L1472.0 500.5L1472.5 489.7L1473.0 500.5L1473.5 491.2L1474.0 500.5L1474.5 489.8L1475.0 500.5L1475.5 487.8L1476.0 500.5L1476.5 491.8L1477.0 500.5L1477.5 486.7L1478.0 500.5L1478.5 490.9L1479.0 490.8L1479.5 500.5L1480.0 488.8L1480.5 500.5L1481.0 491.0L1481.5 500.5L1482.0 487.8L1482.5 500.5L1483.0 489.7L1483.5 500.5L1484.0 487.2L1484.5 500.5L1485.0 489.7L1485.5 500.5L1486.0 500.5L1486.5 489.7L1487.0 486.8L1487.5 500.5L1488.0 500.5L1488.5 490.9L1489.0 500.5L1489.5 490.3L1490.0 500.5L1490.5 489.7L1491.0 488.3L1491.5 500.5L1492.0 487.3L1492.5 500.5L1493.0 488.6L1493.5 500.5L1494.0 500.5L1494.5 486.8L1495.0 500.5L1495.5 486.8L1496.0 500.5L1496.5 490.4L1497.0 500.5L1497.5 490.1L1498.0 500.5L1498.5 490.0L1499.0 489.1L1499.5 500.5L1500.0 500.5L1500.5 490.6L1501.0 500.5L1501.5 488.6L1502.0 500.5L1502.5 487.4L1503.0 488.9L1503.5 500.5L1504.0 489.7L1504.5 500.5L1505.0 490.9L1505.5 500.5L1506.0 500.5L1506.5 488.6L1507.0 500.5L1507.5 489.7L1508.0 500.5L1508.5 488.4L1509.0 500.5L1509.5 492.3L1510.0 500.5L1510.5 488.2L1511.0 500.5L1511.5 492.4L1512.0 500.5L1512.5 486.8L1513.0 500.5L1513.5 487.1L1514.0 500.5L1514.5 491.1L1515.0 489.3L1515.5 500.5L1516.0 488.8L1516.5 500.5L1517.0 491.0L1517.5 500.5L1518.0 500.5L1518.5 486.8L1519.0 500.5L1519.5 492.8" stroke="#3b4e9b"/>
<path d="M830.5 500.5L833.0 498.7L836.5 485.8L839.9 500.5L843.2 495.0L846.3 500.5L849.4 500.5L852.4 490.3L855.3 500.5L858.1 497.4L860.8 500.5L863.5 490.5L866.1 488.5L868.6 500.5L871.0 497.7L873.4 492.6L875.8 499.2L878.1 500.5L880.3 497.7L882.5 497.0L884.7 500.5L886.8 500.5L888.8 498.9L890.8 490.9L892.8 500.5L894.7 496.5L896.6 492.0L898.5 496.2L900.3 489.9L902.1 500.5L903.9 500.5L905.6 491.9L907.3 497.2L909.0 494.1L910.7 495.2L912.3 495.8L913.9 496.1L915.5 500.5L917.0 490.6L918.5 500.5L920.0 490.0L921.5 462.6L923.0 471.0L924.4 500.5L925.8 499.3L927.2 499.1L928.6 499.4L930.2 491.8L931.0 496.0L932.6 495.8L933.9 492.7L935.2 491.3L936.5 500.5L937.7 500.5L939.0 486.5L940.2 500.5L941.4 491.8L942.9 500.5L943.5 489.7L944.9 492.3L946.1 500.5L947.2 500.5L948.5 500.5L949.1 500.5L950.6 497.7L951.7 488.8L952.7 500.5L954.0 497.5L954.8 500.5L955.9 487.9L956.9 500.5L958.2 500.5L959.0 500.5L960.0 496.0L961.0 497.9L961.8 496.5L962.9 490.6L963.9 500.5L964.5 494.9L965.8 500.5L966.6 500.5L967.4 493.6L968.6 500.5L969.5 500.5L970.1 500.5L971.3 500.5L972.2 488.8L973.0 494.5L973.9 500.5L975.0 496.1L975.8 500.5L976.5 496.7L977.1 500.5L978.2 500.5L979.2 492.6L980.0 492.2L980.6 496.9L981.4 500.5L982.0 500.5L982.8 500.5L983.8 498.7L984.9 490.4L985.5 499.6L986.2 500.5L987.0 500.5L987.6 500.5L988.4 497.4L989.0 497.0L989.8 500.4L990.5 478.5L991.1 477.3L991.9 500.5L992.5 500.5L993.2 500.5L994.0 500.5L994.6 500.5L995.4 497.2L996.0 500.5L996.8 500.5L997.5 495.3L998.1 488.3L998.9 499.0L999.5 485.5L1000.2 500.5L1001.0 500.5L1001.6 499.8L1002.4 495.8L1003.0 500.5L1003.8 499.2L1004.5 499.7L1005.1 498.8L1005.9 495.4L1006.5 497.0L1007.2 500.5L1008.0 492.6L1008.6 491.7L1009.4 500.5L1010.0 500.5L1010.8 500.5L1011.5 487.7L1012.1 493.3L1012.9 500.5L1013.5 500.5L1014.2 500.5L1015.0 500.5L1015.6 500.5L1016.4 493.1L1017.0 488.3L1017.8 494.5L1018.5 494.1L1019.1 495.7L1019.9 494.0L1020.5 500.5L1021.2 499.4L1022.0 497.6L1022.6 500.5L1023.4 499.3L1024.0 500.5L1024.8 500.5L1025.5 500.5L1026.2 483.1L1026.8 490.1L1027.5 497.8L1028.2 496.6L1029.0 496.4L1029.7 490.5L1030.3 493.3L1031.0 484.8L1031.8 499.1L1032.5 500.5L1033.2 498.2L1033.8 500.5L1034.5 496.4L1035.2 499.9L1036.0 495.1L1036.7 497.4L1037.3 498.7L1038.0 488.5L1038.8 500.5L1039.5 495.7L1040.2 498.3L1040.8 496.9L1041.5 497.2L1042.2 495.2L1043.0 500.5L1043.7 500.5L1044.3 500.5L1045.0 500.5L1045.8 489.9L1046.5 500.5L1047.2 497.5L1047.8 495.7L1048.5 499.8L1049.2 500.5L1050.0 492.5L1050.7 498.1L1051.3 495.2L1052.0 493.9L1052.8 500.5L1053.5 490.0L1054.2 492.7L1054.8 488.7L1055.5 500.5L1056.2 489.9L1057.0 500.5L1057.7 491.8L1058.3 500.5L1059.0 500.5L1059.8 491.5L1060.5 493.1L1061.2 500.5L1061.8 487.7L1062.5 500.5L1063.2 490.6L1064.0 500.5L1064.7 497.6L1065.3 500.5L1066.0 493.9L1066.8 500.5L1067.5 488.6L1068.2 500.5L1068.8 500.5L1069.5 487.4L1070.2 497.5L1071.0 490.4L1071.7 497.9L1072.3 491.8L1073.0 500.5L1073.8 493.3L1074.5 500.5L1075.2 490.0L1075.8 490.6L1076.5 494.2L1077.2 487.1L1078.0 500.5L1078.7 500.5L1079.3 490.0L1080.0 500.5L1080.8 485.2L1081.5 500.5L1082.2 493.2L1082.8 491.7L1083.5 500.5L1084.2 500.5L1085.0 494.8L1085.7 499.6L1086.3 490.6L1087.0 500.5L1087.8 491.4L1088.5 500.5L1089.2 497.1L1089.8 500.5L1090.5 488.6L1091.2 500.5L1092.0 488.6L1092.7 484.4L1093.3 500.5L1094.0 487.6L1094.8 499.2L1095.5 485.8L1096.2 500.5L1096.8 487.4L1097.5 500.5L1098.2 487.1L1099.0 500.5L1099.7 487.2L1100.3 500.5L1101.0 492.4L1101.8 500.5L1102.5 500.5L1103.2 492.6L1103.8 500.5L1104.5 491.4L1105.2 492.2L1106.0 500.5L1106.7 494.4L1107.3 500.5L1108.0 488.3L1108.8 500.5L1109.5 500.5L1110.2 485.4L1110.8 500.5L1111.5 493.5L1112.2 500.5L1113.0 490.7L1113.7 500.5L1114.3 490.0L1115.0 500.5L1115.8 488.3L1116.5 500.5L1117.2 487.7L1117.8 500.5L1118.5 483.4L1119.2 500.5L1120.0 496.6L1120.7 500.5L1121.3 484.6L1122.0 482.8L1122.8 499.2L1123.5 483.3L1124.2 500.5L1124.8 500.3L1125.5 484.5L1126.2 500.5L1127.0 484.2L1127.7 500.5L1128.3 484.5L1129.0 500.5L1129.8 488.0L1130.5 499.6L1131.2 486.8L1131.8 483.9L1132.5 500.5L1133.2 483.9L1134.0 500.5L1134.7 483.9L1135.3 500.5L1136.0 483.2L1136.8 500.5L1137.5 484.2L1138.2 500.5L1138.8 488.8L1139.5 500.5L1140.2 477.5L1141.0 498.5L1141.7 484.5L1142.3 500.5L1143.0 484.1L1143.8 500.5L1144.5 483.2L1145.2 497.3L1145.8 500.5L1146.5 487.3L1147.2 498.0L1148.0 480.2L1148.7 481.5L1149.3 500.5L1150.0 482.9L1150.8 500.5L1151.5 500.5L1152.2 481.1L1152.8 500.5L1153.5 481.6L1154.2 500.5L1155.0 482.9L1155.7 484.5L1156.3 500.5L1157.0 477.2L1157.8 500.1L1158.5 482.4L1159.2 500.2L1159.8 479.2L1160.5 500.5L1161.2 497.1L1162.0 480.3L1162.7 498.0L1163.3 481.0L1164.0 497.8L1164.8 480.2L1165.5 500.5L1166.2 474.0L1166.8 495.6L1167.5 474.0L1168.2 500.5L1169.0 474.2L1169.7 489.2L1170.3 477.7L1171.0 473.4L1171.8 488.0L1172.5 500.5L1173.2 470.6L1173.8 476.4L1174.5 494.1L1175.2 471.9L1176.0 500.5L1176.7 474.9L1177.3 498.7L1178.0 475.8L1178.8 490.2L1179.5 472.9L1180.2 495.5L1180.8 470.7L1181.5 495.8L1182.2 496.4L1183.0 476.2L1183.7 474.2L1184.3 499.0L1185.0 491.2L1185.8 474.8L1186.5 471.9L1187.2 490.2L1187.8 499.4L1188.5 476.2L1189.2 468.4L1190.0 496.4L1190.7 481.4L1191.3 468.0L1192.0 467.7L1192.8 500.5L1193.5 489.3L1194.2 467.8L1194.8 470.5L1195.5 485.7L1196.2 487.7L1197.0 469.3L1197.7 492.9L1198.3 463.5L1199.0 458.0L1199.8 479.5L1200.5 489.1L1201.2 463.9L1201.8 484.6L1202.5 458.4L1203.2 461.1L1204.0 488.4L1204.7 457.2L1205.3 483.4L1206.0 450.5L1206.8 485.8L1207.5 456.1L1208.2 477.3L1208.8 448.7L1209.5 480.4L1210.2 447.5L1211.0 472.1L1211.7 441.1L1212.3 471.7L1213.0 441.7L1213.8 464.3L1214.5 436.2L1215.2 456.0L1215.8 430.6L1216.5 461.7L1217.2 452.1L1218.0 431.2L1218.7 450.0L1219.3 427.2L1220.0 417.5L1220.8 458.6L1221.5 453.5L1222.2 427.4L1222.8 454.0L1223.5 428.7L1224.2 457.8L1225.0 432.7L1225.7 458.4L1226.3 439.5L1227.0 466.6L1227.8 434.7L1228.5 439.7L1229.2 465.9L1229.8 445.6L1230.5 469.1L1231.2 475.6L1232.0 449.9L1232.7 454.3L1233.3 476.0L1234.0 458.4L1234.8 491.1L1235.5 487.2L1236.2 457.2L1236.8 492.5L1237.5 462.0L1238.2 472.6L1239.0 490.7L1239.7 497.0L1240.3 470.6L1241.0 473.8L1241.8 494.7L1242.5 477.5L1243.2 494.7L1243.8 471.6L1244.5 500.5L1245.2 473.9L1246.0 500.5L1246.7 475.2L1247.3 500.5L1248.0 498.0L1248.8 478.2L1249.5 480.5L1250.2 500.5L1250.8 500.5L1251.5 477.8L1252.2 500.5L1253.0 478.5L1253.7 500.5L1254.3 478.8L1255.0 479.0L1255.8 500.5L1256.5 480.5L1257.2 500.5L1257.8 500.5L1258.5 480.7L1259.2 500.5L1260.0 479.7L1260.7 500.5L1261.3 481.9L1262.0 500.5L1262.8 482.1L1263.5 500.5L1264.2 479.3L1264.8 500.5L1265.5 481.2L1266.2 500.5L1267.0 483.8L1267.7 500.5L1268.3 488.6L1269.0 484.4L1269.8 500.5L1270.5 500.5L1271.2 484.5L1271.8 500.5L1272.5 480.9L1273.2 488.9L1274.0 500.5L1274.7 484.5L1275.3 500.5L1276.0 485.4L1276.8 500.5L1277.5 482.8L1278.2 500.5L1278.8 485.6L1279.5 500.5L1280.2 484.3L1281.0 500.5L1281.7 488.4L1282.3 500.5L1283.0 483.9L1283.8 500.5L1284.5 483.9L1285.2 500.5L1285.8 500.5L1286.5 486.4L1287.2 500.5L1288.0 480.1L1288.7 500.5L1289.3 486.4L1290.0 432.7L1290.5 500.5L1291.0 489.8L1291.5 500.5L1292.0 488.5L1292.5 500.5L1293.0 486.6L1293.5 500.5L1294.0 484.8L1294.5 500.5L1295.0 483.6L1295.5 500.5L1296.0 491.0L1296.5 500.5L1297.0 491.1L1297.5 500.5L1298.0 500.5L1298.5 485.6L1299.0 500.5L1299.5 487.1L1300.0 500.5L1300.5 488.0L1301.0 500.5L1301.5 489.2L1302.0 490.2L1302.5 500.5L1303.0 484.1L1303.5 500.5L1304.0 482.0L1304.5 500.5L1305.0 488.0L1305.5 500.5L1306.0 482.1L1306.5 500.5L1307.0 486.6L1307.5 500.5L1308.0 483.4L1308.5 500.5L1309.0 488.9L1309.5 500.5L1310.0 493.0L1310.5 500.5L1311.0 487.7L1311.5 500.5L1312.0 489.3L1312.5 500.5L1313.0 488.6L1313.5 500.5L1314.0 488.5L1314.5 500.5L1315.0 500.5L1315.5 491.5L1316.0 500.5L1316.5 488.6L1317.0 487.6L1317.5 500.5L1318.0 500.5L1318.5 484.3L1319.0 484.2L1319.5 500.5L1320.0 500.5L1320.5 486.1L1321.0 500.5L1321.5 489.7L1322.0 500.5L1322.5 489.5L1323.0 500.5L1323.5 489.1L1324.0 500.5L1324.5 487.5L1325.0 500.5L1325.5 485.5L1326.0 489.5L1326.5 500.5L1327.0 486.2L1327.5 500.5L1328.0 487.9L1328.5 500.5L1329.0 491.5L1329.5 500.5L1330.0 470.8L1330.5 500.5L1331.0 490.4L1331.5 500.5L1332.0 490.7L1332.5 500.5L1333.0 490.1L1333.5 500.5L1334.0 490.1L1334.5 500.5L1335.0 490.0L1335.5 500.5L1336.0 492.2L1336.5 500.5L1337.0 485.9L1337.5 500.5L1338.0 491.5L1338.5 500.5L1339.0 490.5L1339.5 500.5L1340.0 489.3L1340.5 500.5L1341.0 491.5L1341.5 500.5L1342.0 490.5L1342.5 500.5L1343.0 500.5L1343.5 487.2L1344.0 500.5L1344.5 487.6L1345.0 487.2L1345.5 500.5L1346.0 487.5L1346.5 500.5L1347.0 500.5L1347.5 490.9L1348.0 485.1L1348.5 500.5L1349.0 485.2L1349.5 500.5L1350.0 488.5L1350.5 500.5L1351.0 491.1L1351.5 500.5L1352.0 500.5L1352.5 487.0L1353.0 491.6L1353.5 500.5L1354.0 484.0L1354.5 500.5L1355.0 488.7L1355.5 500.5L1356.0 488.7L1356.5 500.5L1357.0 487.0L1357.5 500.5L1358.0 500.5L1358.5 490.5L1359.0 500.5L1359.5 469.7L1360.0 486.0L1360.5 500.5L1361.0 500.5L1361.5 491.1L1362.0 500.5L1362.5 488.2L1363.0 500.5L1363.5 484.0L1364.0 490.0L1364.5 500.5L1365.0 485.6L1365.5 500.5L1366.0 500.5L1366.5 488.8L1367.0 500.5L1367.5 489.9L1368.0 489.4L1368.5 500.5L1369.0 485.4L1369.5 500.5L1370.0 488.7L1370.5 500.5L1371.0 500.5L1371.5 491.5L1372.0 500.5L1372.5 490.6L1373.0 500.5L1373.5 487.6L1374.0 500.5L1374.5 488.2L1375.0 487.3L1375.5 500.5L1376.0 483.9L1376.5 500.5L1377.0 487.9L1377.5 500.5L1378.0 489.6L1378.5 500.5L1379.0 490.7L1379.5 500.5L1380.0 485.8L1380.5 500.5L1381.0 500.5L1381.5 488.1L1382.0 488.5L1382.5 500.5L1383.0 500.5L1383.5 489.5L1384.0 500.5L1384.5 488.5L1385.0 500.5L1385.5 488.9L1386.0 500.5L1386.5 489.9L1387.0 500.5L1387.5 488.7L1388.0 500.5L1388.5 487.0L1389.0 488.2L1389.5 500.5L1390.0 489.4L1390.5 500.5L1391.0 488.2L1391.5 500.5L1392.0 490.4L1392.5 500.5L1393.0 500.5L1393.5 491.0L1394.0 500.5L1394.5 490.6L1395.0 500.5L1395.5 489.2L1396.0 500.5L1396.5 488.7L1397.0 500.5L1397.5 488.4L1398.0 500.5L1398.5 488.3L1399.0 500.5L1399.5 465.7L1400.0 489.8L1400.5 500.5L1401.0 487.4L1401.5 500.5L1402.0 490.3L1402.5 500.5L1403.0 489.4L1403.5 500.5L1404.0 500.5L1404.5 488.0L1405.0 490.9L1405.5 500.5L1406.0 489.6L1406.5 500.5L1407.0 490.2L1407.5 500.5L1408.0 500.5L1408.5 489.8L1409.0 500.5L1409.5 490.1L1410.0 485.9L1410.5 500.5L1411.0 492.3L1411.5 500.5L1412.0 484.9L1412.5 500.5L1413.0 489.2L1413.5 500.5L1414.0 482.6L1414.5 500.5L1415.0 490.1L1415.5 500.5L1416.0 487.6L1416.5 500.5L1417.0 500.5L1417.5 490.7L1418.0 500.5L1418.5 488.0L1419.0 500.5L1419.5 486.1L1420.0 487.8L1420.5 500.5L1421.0 490.1L1421.5 500.5L1422.0 488.3L1422.5 500.5L1423.0 488.3L1423.5 500.5L1424.0 488.9L1424.5 500.5L1425.0 489.0L1425.5 500.5L1426.0 500.5L1426.5 486.8L1427.0 500.5L1427.5 486.9L1428.0 500.5L1428.5 489.7L1429.0 500.5L1429.5 488.6L1430.0 500.5L1430.5 487.1L1431.0 489.5L1431.5 500.5L1432.0 500.5L1432.5 491.9L1433.0 500.5L1433.5 487.9L1434.0 488.8L1434.5 500.5L1435.0 490.3L1435.5 500.5L1436.0 485.2L1436.5 500.5L1437.0 488.9L1437.5 500.5L1438.0 500.5L1438.5 488.6L1439.0 500.5L1439.5 488.0L1440.0 478.5L1440.5 500.5L1441.0 500.5L1441.5 486.2L1442.0 500.5L1442.5 489.7L1443.0 500.5L1443.5 487.4L1444.0 500.5L1444.5 487.6L1445.0 500.5L1445.5 489.8L1446.0 500.5L1446.5 488.3L1447.0 500.5L1447.5 482.7L1448.0 500.5L1448.5 485.4L1449.0 491.0L1449.5 500.5L1450.0 486.8L1450.5 500.5L1451.0 487.5L1451.5 500.5L1452.0 488.4L1452.5 500.5L1453.0 491.4L1453.5 500.5L1454.0 500.5L1454.5 487.0L1455.0 500.5L1455.5 488.4L1456.0 500.5L1456.5 486.4L1457.0 490.1L1457.5 500.5L1458.0 488.6L1458.5 500.5L1459.0 500.5L1459.5 486.4L1460.0 500.5L1460.5 488.4L1461.0 500.5L1461.5 488.5L1462.0 500.5L1462.5 487.6L1463.0 500.5L1463.5 487.3L1464.0 500.5L1464.5 491.4L1465.0 490.0L1465.5 500.5L1466.0 500.5L1466.5 488.9L1467.0 500.5L1467.5 488.4L1468.0 500.5L1468.5 483.6L1469.0 488.6L1469.5 500.5L1470.0 489.1L1470.5 500.5L1471.0 487.6L1471.5 500.5L1472.0 500.5L1472.5 489.6L1473.0 500.5L1473.5 488.6L1474.0 500.5L1474.5 487.7L1475.0 500.5L1475.5 487.2L1476.0 500.5L1476.5 488.0L1477.0 489.3L1477.5 500.5L1478.0 500.5L1478.5 489.8L1479.0 490.4L1479.5 500.5L1480.0 491.0L1480.5 500.5L1481.0 500.5L1481.5 487.0L1482.0 500.5L1482.5 489.5L1483.0 500.5L1483.5 487.8L1484.0 485.2L1484.5 500.5L1485.0 500.5L1485.5 488.9L1486.0 500.5L1486.5 488.0L1487.0 500.5L1487.5 487.4L1488.0 492.1L1488.5 500.5L1489.0 500.5L1489.5 488.0L1490.0 491.7L1490.5 500.5L1491.0 500.5L1491.5 487.5L1492.0 500.5L1492.5 490.2L1493.0 500.5L1493.5 490.3L1494.0 500.5L1494.5 488.2L1495.0 485.3L1495.5 500.5L1496.0 488.0L1496.5 500.5L1497.0 500.5L1497.5 486.0L1498.0 500.5L1498.5 487.4L1499.0 500.5L1499.5 490.9L1500.0 500.5L1500.5 487.3L1501.0 488.5L1501.5 500.5L1502.0 500.5L1502.5 486.2L1503.0 488.4L1503.5 500.5L1504.0 488.7L1504.5 500.5L1505.0 488.8L1505.5 500.5L1506.0 489.3L1506.5 500.5L1507.0 487.8L1507.5 500.5L1508.0 487.0L1508.5 500.5L1509.0 490.3L1509.5 500.5L1510.0 490.4L1510.5 500.5L1511.0 490.2L1511.5 500.5L1512.0 491.2L1512.5 500.5L1513.0 489.4L1513.5 500.5L1514.0 489.0L1514.5 500.5L1515.0 491.6L1515.5 500.5L1516.0 491.7L1516.5 500.5L1517.0 485.8L1517.5 500.5L1518.0 490.2L1518.5 500.5L1519.0 492.1L1519.5 500.5" stroke="#a5303c"/>
<path d="M1221.5 69.9V396.8" stroke="#a5303c" stroke-width="1.25"/>
<path d="M1221.3 391.7V432.5" stroke="#a5303c" stroke-width="2"/>
</g>
<rect x="830.5" y="47.5" width="689.0" height="450.0" fill="none" stroke="#6a6a6a" stroke-width="1"/>
<text x="826.3" y="74.0" text-anchor="end">0</text>
<text x="826.3" y="99.0" text-anchor="end">-10</text>
<text x="826.3" y="125.0" text-anchor="end">-20</text>
<text x="826.3" y="150.0" text-anchor="end">-30</text>
<text x="826.3" y="176.0" text-anchor="end">-40</text>
<text x="826.3" y="201.0" text-anchor="end">-50</text>
<text x="826.3" y="227.0" text-anchor="end">-60</text>
<text x="826.3" y="252.0" text-anchor="end">-70</text>
<text x="826.3" y="278.0" text-anchor="end">-80</text>
<text x="826.3" y="303.0" text-anchor="end">-90</text>
<text x="826.3" y="329.0" text-anchor="end">-100</text>
<text x="826.3" y="354.0" text-anchor="end">-110</text>
<text x="826.3" y="380.0" text-anchor="end">-120</text>
<text x="826.3" y="405.0" text-anchor="end">-130</text>
<text x="826.3" y="431.0" text-anchor="end">-140</text>
<text x="826.3" y="456.0" text-anchor="end">-150</text>
<text x="826.3" y="482.0" text-anchor="end">-160</text>
<text x="830.5" y="511.6" text-anchor="middle">20</text>
<text x="870.9" y="511.6" text-anchor="middle">30</text>
<text x="921.9" y="511.6" text-anchor="middle">50</text>
<text x="991.0" y="511.6" text-anchor="middle">100</text>
<text x="1060.2" y="511.6" text-anchor="middle">200</text>
<text x="1100.6" y="511.6" text-anchor="middle">300</text>
<text x="1151.6" y="511.6" text-anchor="middle">500</text>
<text x="1220.7" y="511.6" text-anchor="middle">1k</text>
<text x="1289.8" y="511.6" text-anchor="middle">2k</text>
<text x="1330.3" y="511.6" text-anchor="middle">3k</text>
<text x="1381.2" y="511.6" text-anchor="middle">5k</text>
<text x="1450.4" y="511.6" text-anchor="middle">10k</text>
<text x="1519.5" y="511.6" text-anchor="middle">20k</text>
<text x="1163.67" y="44" font-size="12" fill="#000" textLength="21.26" lengthAdjust="spacingAndGlyphs">FFT</text>
<text x="1133.77" y="523.8" font-size="12" fill="#000" textLength="80.04" lengthAdjust="spacingAndGlyphs">Frequency (Hz)</text>
<text transform="translate(797 304.22) rotate(-90)" font-size="12" textLength="64.22" lengthAdjust="spacingAndGlyphs">Level (dBrA)</text>
</svg>
<div class="t" style="left:16.22px;top:544px;font-size:12px;letter-spacing:0.178px;">Interpolated:</div>
<svg style="left:99px;top:542px" width="14" height="14" viewBox="0 0 14 14"><circle cx="7" cy="7" r="4.6" fill="#fff" stroke="#005fb8" stroke-width="4"/></svg>
<div class="t" style="left:119.06px;top:544px;font-size:12px;letter-spacing:0.200px;">On</div>
<svg style="left:148px;top:542px" width="14" height="14" viewBox="0 0 14 14"><circle cx="7" cy="7" r="6.1" fill="#f3f3f3" stroke="#6c6c6c" stroke-width="1"/></svg>
<div class="t" style="left:167.92px;top:544px;font-size:12px;transform-origin:0 0;transform:scaleX(1.0740);">Off</div>
<div class="t" style="left:205.86px;top:543px;font-size:12px;letter-spacing:-0.281px;">Show Residual:</div>
<div class="w10" style="left:297px;top:537px;width:123px;height:23px;"><svg style="left:108px;top:8px" width="10" height="6" viewBox="0 0 10 6"><path d="M0.5 0.5L5 5L9.5 0.5" stroke="#404040" stroke-width="1" fill="none"/></svg></div>
<div class="t" style="left:302px;top:543px;font-size:12px;">Off</div>
<div class="t" style="left:430.46px;top:543px;font-size:12px;letter-spacing:-0.243px;">Show Cycles:</div>
<div class="sp" style="left:511px;top:537px;width:71px;height:23px;"><span>3</span><div class="a" style="right:1px;top:1px;width:14px;height:9px;background:#f3f3f3;border:1px solid #dcdcdc;box-sizing:border-box"></div><div class="a" style="right:1px;bottom:1px;width:14px;height:10px;background:#f3f3f3;border:1px solid #dcdcdc;box-sizing:border-box"></div><svg style="left:58px;top:3px" width="8" height="16" viewBox="0 0 8 16"><path d="M0.5 5L4 1.2L7.5 5ZM0.5 10.6L4 14.4L7.5 10.6Z" fill="#000"/></svg></div>
<div class="t" style="left:792.24px;top:543px;font-size:12px;letter-spacing:-0.179px;">FFT Length:</div>
<div class="w10" style="left:868px;top:537px;width:61px;height:23px;"><svg style="left:46px;top:8px" width="10" height="6" viewBox="0 0 10 6"><path d="M0.5 0.5L5 5L9.5 0.5" stroke="#404040" stroke-width="1" fill="none"/></svg></div>
<div class="t" style="left:873px;top:543px;font-size:12px;">256K</div>
<div class="t" style="left:940.47px;top:543px;font-size:12px;letter-spacing:0.198px;">Window:</div>
<div class="w10" style="left:999px;top:537px;width:181px;height:23px;"><svg style="left:166px;top:8px" width="10" height="6" viewBox="0 0 10 6"><path d="M0.5 0.5L5 5L9.5 0.5" stroke="#404040" stroke-width="1" fill="none"/></svg></div>
<div class="t" style="left:1004px;top:543px;font-size:12px;">AP-Equiripple</div>
<div class="t" style="left:1191.50px;top:543px;font-size:12px;transform-origin:0 0;transform:scaleX(0.9443);">Averages:</div>
<div class="sp" style="left:1254px;top:537px;width:70px;height:23px;"><span>3</span><div class="a" style="right:1px;top:1px;width:14px;height:9px;background:#f3f3f3;border:1px solid #dcdcdc;box-sizing:border-box"></div><div class="a" style="right:1px;bottom:1px;width:14px;height:10px;background:#f3f3f3;border:1px solid #dcdcdc;box-sizing:border-box"></div><svg style="left:57px;top:3px" width="8" height="16" viewBox="0 0 8 16"><path d="M0.5 5L4 1.2L7.5 5ZM0.5 10.6L4 14.4L7.5 10.6Z" fill="#000"/></svg></div>
<div class="a" style="left:1331px;top:542px;width:13px;height:13px;box-sizing:border-box;border:1px solid #333;background:#fff;border-radius:2px"></div>
<div class="t" style="left:1349.26px;top:543px;font-size:12px;letter-spacing:-0.243px;">Show Residual</div>
<div class="a" style="left:1440px;top:538px;width:63px;height:23px;box-sizing:border-box;border:1px solid #d0d0d0;border-right:none;background:#fdfdfd;border-radius:3px 0 0 3px"></div>
<div class="t" style="left:1461.85px;top:544px;font-size:12px;transform-origin:0 0;transform:scaleX(0.8803);">Reset</div>
<div class="a" style="left:1509px;top:535px;width:32px;height:25px;box-sizing:border-box;border:1px solid #d0d0d0;background:#fdfdfd;border-radius:3px"></div>
<div class="t" style="left:1516px;top:542px;font-size:11px;letter-spacing:1px">&gt;&gt;</div>
<div class="a" style="left:0px;top:578px;width:1553px;height:7px;background:#487584;"></div>
<svg style="left:768px;top:579px" width="18" height="6" viewBox="0 0 18 6"><g fill="#c6d3da"><circle cx="2.5" cy="2.6" r="1.45"/><circle cx="8.5" cy="2.6" r="1.45"/><circle cx="14.5" cy="2.6" r="1.45"/></g></svg>
<div class="a" style="left:0px;top:585px;width:1553px;height:24px;background:#d3d3d3;"></div>
<div class="a" style="left:0px;top:609px;width:1553px;height:1px;background:#e6eaee;"></div>
<svg style="left:2px;top:589px" width="16" height="16" viewBox="0 0 16 16"><rect width="16" height="16" fill="#2d4757"/><path d="M7 2H9V7H14V9H9V14H7V9H2V7H7Z" fill="#fff"/></svg>
<div class="t" style="left:21.60px;top:590.6px;font-size:12px;letter-spacing:0.016px;">Add Meter</div>
<div class="a" style="left:83px;top:596px;width:0;height:0;border-left:3px solid transparent;border-right:3px solid transparent;border-top:3.2px solid #000"></div>
<div class="sep" style="left:95px;top:590px;height:16px;background:#c4c4c4"></div>
<svg style="left:100px;top:589px" width="16" height="16" viewBox="0 0 16 16"><rect width="16" height="16" fill="#2d4757"/><g fill="none" stroke="#fff" stroke-width="1.9"><ellipse cx="5.8" cy="3.8" rx="3.7" ry="1.5" stroke-width="1.7"/><path d="M2 7.2C2 9.2 9.6 9.2 9.6 7.2M2 10.4C2 12.4 9.6 12.4 9.6 10.4M2 13.4C2 15.2 9.6 15.2 9.6 13.4"/></g><path d="M7.4 6.7H11.4V4.3L15.9 8.1L11.4 11.9V9.5H7.4Z" fill="#fff" stroke="#2d4757" stroke-width="0.7"/></svg>
<div class="t" style="left:118.89px;top:590.6px;font-size:12px;transform-origin:0 0;transform:scaleX(0.9428);">Save Meter Data</div>
<div class="sep" style="left:213px;top:590px;height:16px;background:#c4c4c4"></div>
<svg style="left:218px;top:589px" width="16" height="16" viewBox="0 0 16 16"><rect width="16" height="16" fill="#2d4757"/><path d="M5 3L12 8L5 13Z" fill="#fff"/></svg>
<div class="t" style="left:236.24px;top:590.6px;font-size:12px;letter-spacing:-0.109px;">Regulate</div>
<svg style="left:1533px;top:592px" width="13" height="11" viewBox="0 0 13 11"><path d="M5 0H8V2.5H10.2L6.5 5.9L2.8 2.5H5Z" fill="#30508c"/><rect x="0" y="8.1" width="13" height="1.8" fill="#30508c"/></svg>
<div class="a" style="left:3px;top:613px;width:758px;height:158px;background:#dbe5e8;"></div>
<div class="a" style="left:3px;top:638px;width:758px;height:1px;background:#a2a2a2;"></div>
<div class="a" style="left:3px;top:639px;width:758px;height:1px;background:#f2f5f6;"></div>
<div class="t" style="left:6.26px;top:618.8px;font-size:16px;letter-spacing:-0.257px;font-weight:bold;">RMS Level</div>
<div class="cb" style="left:92px;top:614px;width:75px;height:23px;"><i></i><b></b></div>
<div class="t" style="left:96.07px;top:620px;font-size:12px;letter-spacing:-0.163px;">Vrms</div>
<svg style="left:170px;top:617px" width="24" height="16" viewBox="0 0 24 16"><rect width="16" height="16" fill="#2d4757"/><rect x="1" y="2.8" width="14" height="10.3" fill="#fff"/><rect x="1" y="5" width="14" height="3.3" fill="#4a5a96"/><rect x="1" y="8.3" width="14" height="2.7" fill="#3f7a86"/><path d="M1 11L5.4 6.3L9.3 10.8L15 4.8" stroke="#fff" stroke-width="1.1" fill="none"/><path d="M17.8 7H23.4L20.6 10Z" fill="#000"/></svg>
<svg style="left:200px;top:617px" width="16" height="16" viewBox="0 0 16 16"><rect width="16" height="16" fill="#2d4757"/><g transform="translate(8 8)" fill="#fff"><circle r="4.3"/><rect x="-1.35" y="-6.1" width="2.7" height="3.4" rx="0.5" transform="rotate(0)"/><rect x="-1.35" y="-6.1" width="2.7" height="3.4" rx="0.5" transform="rotate(45)"/><rect x="-1.35" y="-6.1" width="2.7" height="3.4" rx="0.5" transform="rotate(90)"/><rect x="-1.35" y="-6.1" width="2.7" height="3.4" rx="0.5" transform="rotate(135)"/><rect x="-1.35" y="-6.1" width="2.7" height="3.4" rx="0.5" transform="rotate(180)"/><rect x="-1.35" y="-6.1" width="2.7" height="3.4" rx="0.5" transform="rotate(225)"/><rect x="-1.35" y="-6.1" width="2.7" height="3.4" rx="0.5" transform="rotate(270)"/><rect x="-1.35" y="-6.1" width="2.7" height="3.4" rx="0.5" transform="rotate(315)"/><circle r="2.0" fill="#34506c"/></g></svg>
<div class="sep" style="left:711px;top:618px;height:15px"></div>
<svg style="left:719px;top:619px" width="12" height="12" viewBox="0 0 12 12"><path d="M0 0H4V2H2V10H10V8H12V12H0Z" fill="#1c3d84"/><path d="M6 0H12V6L10 4L6.4 7.6L4.4 5.6L8 2Z" fill="#1c3d84"/></svg>
<svg style="left:743px;top:620px" width="10" height="10" viewBox="0 0 10 10"><path d="M1.1 1.1L8.9 8.9M8.9 1.1L1.1 8.9" stroke="#1e3c4e" stroke-width="2.1" stroke-linecap="square" fill="none"/></svg>
<div class="a" style="left:5px;top:703px;width:191px;height:1px;background:#9a9a9a;"></div>
<div class="a" style="left:196px;top:643px;width:556px;height:60px;background:#000;"></div>
<div class="a" style="left:196px;top:705px;width:556px;height:1px;background:#a3abb1;"></div>
<div class="a" style="left:196px;top:706px;width:556px;height:60px;background:#000;"></div>
<div class="a" style="left:196px;top:684px;width:556px;height:18px;background:#808080;box-sizing:border-box;border:1px solid #cdcdcd;"></div>
<div class="a" style="left:197px;top:685px;width:412px;height:16px;background:#00f80a;"></div>
<div class="a" style="left:198px;top:691px;width:452px;height:3px;background:#000;"></div>
<div class="a" style="left:196px;top:706px;width:556px;height:18px;background:#808080;box-sizing:border-box;border:1px solid #cdcdcd;"></div>
<div class="a" style="left:197px;top:707px;width:412px;height:16px;background:#00f80a;"></div>
<div class="a" style="left:198px;top:713px;width:453.5px;height:3px;background:#000;"></div>
<svg style="left:183px;top:668px" width="10" height="10" viewBox="0 0 10 10"><path d="M0 0H10L5 10Z" fill="#000"/></svg>
<svg style="left:183px;top:730px" width="10" height="10" viewBox="0 0 10 10"><path d="M0 0H10L5 10Z" fill="#000"/></svg>
<div class="a" style="left:767px;top:613px;width:758px;height:158px;background:#dbe5e8;"></div>
<div class="a" style="left:767px;top:638px;width:758px;height:1px;background:#a2a2a2;"></div>
<div class="a" style="left:767px;top:639px;width:758px;height:1px;background:#f2f5f6;"></div>
<div class="t" style="left:771.44px;top:618.8px;font-size:16px;letter-spacing:0.256px;font-weight:bold;">THD+N Ratio</div>
<div class="cb" style="left:879px;top:614px;width:75px;height:23px;"><i></i><b></b></div>
<div class="t" style="left:883.18px;top:620px;font-size:12px;letter-spacing:-0.240px;">%</div>
<svg style="left:957px;top:617px" width="24" height="16" viewBox="0 0 24 16"><rect width="16" height="16" fill="#2d4757"/><rect x="1" y="2.8" width="14" height="10.3" fill="#fff"/><rect x="1" y="5" width="14" height="3.3" fill="#4a5a96"/><rect x="1" y="8.3" width="14" height="2.7" fill="#3f7a86"/><path d="M1 11L5.4 6.3L9.3 10.8L15 4.8" stroke="#fff" stroke-width="1.1" fill="none"/><path d="M17.8 7H23.4L20.6 10Z" fill="#000"/></svg>
<svg style="left:987px;top:617px" width="16" height="16" viewBox="0 0 16 16"><rect width="16" height="16" fill="#2d4757"/><g transform="translate(8 8)" fill="#fff"><circle r="4.3"/><rect x="-1.35" y="-6.1" width="2.7" height="3.4" rx="0.5" transform="rotate(0)"/><rect x="-1.35" y="-6.1" width="2.7" height="3.4" rx="0.5" transform="rotate(45)"/><rect x="-1.35" y="-6.1" width="2.7" height="3.4" rx="0.5" transform="rotate(90)"/><rect x="-1.35" y="-6.1" width="2.7" height="3.4" rx="0.5" transform="rotate(135)"/><rect x="-1.35" y="-6.1" width="2.7" height="3.4" rx="0.5" transform="rotate(180)"/><rect x="-1.35" y="-6.1" width="2.7" height="3.4" rx="0.5" transform="rotate(225)"/><rect x="-1.35" y="-6.1" width="2.7" height="3.4" rx="0.5" transform="rotate(270)"/><rect x="-1.35" y="-6.1" width="2.7" height="3.4" rx="0.5" transform="rotate(315)"/><circle r="2.0" fill="#34506c"/></g></svg>
<div class="sep" style="left:1475px;top:618px;height:15px"></div>
<svg style="left:1483px;top:619px" width="12" height="12" viewBox="0 0 12 12"><path d="M0 0H4V2H2V10H10V8H12V12H0Z" fill="#1c3d84"/><path d="M6 0H12V6L10 4L6.4 7.6L4.4 5.6L8 2Z" fill="#1c3d84"/></svg>
<svg style="left:1507px;top:620px" width="10" height="10" viewBox="0 0 10 10"><path d="M1.1 1.1L8.9 8.9M8.9 1.1L1.1 8.9" stroke="#1e3c4e" stroke-width="2.1" stroke-linecap="square" fill="none"/></svg>
<div class="a" style="left:769px;top:703px;width:191px;height:1px;background:#9a9a9a;"></div>
<div class="a" style="left:960px;top:643px;width:556px;height:60px;background:#000;"></div>
<div class="a" style="left:960px;top:705px;width:556px;height:1px;background:#a3abb1;"></div>
<div class="a" style="left:960px;top:706px;width:556px;height:60px;background:#000;"></div>
<div class="a" style="left:960px;top:684px;width:556px;height:18px;background:#808080;box-sizing:border-box;border:1px solid #cdcdcd;"></div>
<div class="a" style="left:962px;top:691px;width:553px;height:3px;background:#000;"></div>
<div class="a" style="left:960px;top:706px;width:556px;height:18px;background:#808080;box-sizing:border-box;border:1px solid #cdcdcd;"></div>
<div class="a" style="left:962px;top:713px;width:553px;height:3px;background:#000;"></div>
<svg style="left:947px;top:668px" width="10" height="10" viewBox="0 0 10 10"><path d="M0 0H10L5 10Z" fill="#000"/></svg>
<svg style="left:947px;top:730px" width="10" height="10" viewBox="0 0 10 10"><path d="M0 0H10L5 10Z" fill="#000"/></svg>
<div class="a" style="left:3px;top:777px;width:758px;height:158px;background:#dbe5e8;"></div>
<div class="a" style="left:3px;top:802px;width:758px;height:1px;background:#a2a2a2;"></div>
<div class="a" style="left:3px;top:803px;width:758px;height:1px;background:#f2f5f6;"></div>
<div class="t" style="left:6.26px;top:782.8px;font-size:16px;letter-spacing:-0.188px;font-weight:bold;">Frequency</div>
<div class="cb" style="left:93px;top:778px;width:75px;height:23px;"><i></i><b></b></div>
<div class="t" style="left:96.08px;top:784px;font-size:12px;transform-origin:0 0;transform:scaleX(1.0578);">Hz</div>
<svg style="left:171px;top:781px" width="24" height="16" viewBox="0 0 24 16"><rect width="16" height="16" fill="#2d4757"/><rect x="1" y="2.8" width="14" height="10.3" fill="#fff"/><rect x="1" y="5" width="14" height="3.3" fill="#4a5a96"/><rect x="1" y="8.3" width="14" height="2.7" fill="#3f7a86"/><path d="M1 11L5.4 6.3L9.3 10.8L15 4.8" stroke="#fff" stroke-width="1.1" fill="none"/><path d="M17.8 7H23.4L20.6 10Z" fill="#000"/></svg>
<svg style="left:201px;top:781px" width="16" height="16" viewBox="0 0 16 16"><rect width="16" height="16" fill="#2d4757"/><g transform="translate(8 8)" fill="#fff"><circle r="4.3"/><rect x="-1.35" y="-6.1" width="2.7" height="3.4" rx="0.5" transform="rotate(0)"/><rect x="-1.35" y="-6.1" width="2.7" height="3.4" rx="0.5" transform="rotate(45)"/><rect x="-1.35" y="-6.1" width="2.7" height="3.4" rx="0.5" transform="rotate(90)"/><rect x="-1.35" y="-6.1" width="2.7" height="3.4" rx="0.5" transform="rotate(135)"/><rect x="-1.35" y="-6.1" width="2.7" height="3.4" rx="0.5" transform="rotate(180)"/><rect x="-1.35" y="-6.1" width="2.7" height="3.4" rx="0.5" transform="rotate(225)"/><rect x="-1.35" y="-6.1" width="2.7" height="3.4" rx="0.5" transform="rotate(270)"/><rect x="-1.35" y="-6.1" width="2.7" height="3.4" rx="0.5" transform="rotate(315)"/><circle r="2.0" fill="#34506c"/></g></svg>
<div class="sep" style="left:711px;top:782px;height:15px"></div>
<svg style="left:719px;top:783px" width="12" height="12" viewBox="0 0 12 12"><path d="M0 0H4V2H2V10H10V8H12V12H0Z" fill="#1c3d84"/><path d="M6 0H12V6L10 4L6.4 7.6L4.4 5.6L8 2Z" fill="#1c3d84"/></svg>
<svg style="left:743px;top:784px" width="10" height="10" viewBox="0 0 10 10"><path d="M1.1 1.1L8.9 8.9M8.9 1.1L1.1 8.9" stroke="#1e3c4e" stroke-width="2.1" stroke-linecap="square" fill="none"/></svg>
<div class="a" style="left:5px;top:867px;width:191px;height:1px;background:#9a9a9a;"></div>
<div class="a" style="left:196px;top:807px;width:556px;height:60px;background:#000;"></div>
<div class="a" style="left:196px;top:869px;width:556px;height:1px;background:#a3abb1;"></div>
<div class="a" style="left:196px;top:870px;width:556px;height:60px;background:#000;"></div>
<div class="a" style="left:196px;top:848px;width:556px;height:18px;background:#808080;box-sizing:border-box;border:1px solid #cdcdcd;"></div>
<div class="a" style="left:197px;top:849px;width:316px;height:16px;background:#00f80a;"></div>
<div class="a" style="left:198px;top:855px;width:553px;height:3px;background:#000;"></div>
<div class="a" style="left:196px;top:870px;width:556px;height:18px;background:#808080;box-sizing:border-box;border:1px solid #cdcdcd;"></div>
<div class="a" style="left:197px;top:871px;width:316px;height:16px;background:#00f80a;"></div>
<div class="a" style="left:198px;top:877px;width:553px;height:3px;background:#000;"></div>
<svg style="left:183px;top:832px" width="10" height="10" viewBox="0 0 10 10"><path d="M0 0H10L5 10Z" fill="#000"/></svg>
<svg style="left:183px;top:894px" width="10" height="10" viewBox="0 0 10 10"><path d="M0 0H10L5 10Z" fill="#000"/></svg>
<div class="a" style="left:767px;top:777px;width:758px;height:158px;background:#dbe5e8;"></div>
<div class="a" style="left:767px;top:802px;width:758px;height:1px;background:#a2a2a2;"></div>
<div class="a" style="left:767px;top:803px;width:758px;height:1px;background:#f2f5f6;"></div>
<div class="t" style="left:770.76px;top:782.8px;font-size:16px;letter-spacing:0.145px;font-weight:bold;">SINAD</div>
<div class="cb" style="left:828px;top:778px;width:75px;height:23px;"><i></i><b></b></div>
<div class="t" style="left:831.92px;top:784px;font-size:12px;letter-spacing:-0.460px;">dB</div>
<svg style="left:906px;top:781px" width="24" height="16" viewBox="0 0 24 16"><rect width="16" height="16" fill="#2d4757"/><rect x="1" y="2.8" width="14" height="10.3" fill="#fff"/><rect x="1" y="5" width="14" height="3.3" fill="#4a5a96"/><rect x="1" y="8.3" width="14" height="2.7" fill="#3f7a86"/><path d="M1 11L5.4 6.3L9.3 10.8L15 4.8" stroke="#fff" stroke-width="1.1" fill="none"/><path d="M17.8 7H23.4L20.6 10Z" fill="#000"/></svg>
<svg style="left:936px;top:781px" width="16" height="16" viewBox="0 0 16 16"><rect width="16" height="16" fill="#2d4757"/><g transform="translate(8 8)" fill="#fff"><circle r="4.3"/><rect x="-1.35" y="-6.1" width="2.7" height="3.4" rx="0.5" transform="rotate(0)"/><rect x="-1.35" y="-6.1" width="2.7" height="3.4" rx="0.5" transform="rotate(45)"/><rect x="-1.35" y="-6.1" width="2.7" height="3.4" rx="0.5" transform="rotate(90)"/><rect x="-1.35" y="-6.1" width="2.7" height="3.4" rx="0.5" transform="rotate(135)"/><rect x="-1.35" y="-6.1" width="2.7" height="3.4" rx="0.5" transform="rotate(180)"/><rect x="-1.35" y="-6.1" width="2.7" height="3.4" rx="0.5" transform="rotate(225)"/><rect x="-1.35" y="-6.1" width="2.7" height="3.4" rx="0.5" transform="rotate(270)"/><rect x="-1.35" y="-6.1" width="2.7" height="3.4" rx="0.5" transform="rotate(315)"/><circle r="2.0" fill="#34506c"/></g></svg>
<div class="sep" style="left:1475px;top:782px;height:15px"></div>
<svg style="left:1483px;top:783px" width="12" height="12" viewBox="0 0 12 12"><path d="M0 0H4V2H2V10H10V8H12V12H0Z" fill="#1c3d84"/><path d="M6 0H12V6L10 4L6.4 7.6L4.4 5.6L8 2Z" fill="#1c3d84"/></svg>
<svg style="left:1507px;top:784px" width="10" height="10" viewBox="0 0 10 10"><path d="M1.1 1.1L8.9 8.9M8.9 1.1L1.1 8.9" stroke="#1e3c4e" stroke-width="2.1" stroke-linecap="square" fill="none"/></svg>
<div class="a" style="left:769px;top:867px;width:191px;height:1px;background:#9a9a9a;"></div>
<div class="a" style="left:960px;top:807px;width:556px;height:60px;background:#000;"></div>
<div class="a" style="left:960px;top:869px;width:556px;height:1px;background:#a3abb1;"></div>
<div class="a" style="left:960px;top:870px;width:556px;height:60px;background:#000;"></div>
<div class="a" style="left:960px;top:848px;width:556px;height:18px;background:#808080;box-sizing:border-box;border:1px solid #cdcdcd;"></div>
<div class="a" style="left:961px;top:849px;width:554px;height:16px;background:#00f80a;"></div>
<div class="a" style="left:962px;top:855px;width:553px;height:3px;background:#000;"></div>
<div class="a" style="left:960px;top:870px;width:556px;height:18px;background:#808080;box-sizing:border-box;border:1px solid #cdcdcd;"></div>
<div class="a" style="left:961px;top:871px;width:554px;height:16px;background:#00f80a;"></div>
<div class="a" style="left:962px;top:877px;width:553px;height:3px;background:#000;"></div>
<svg style="left:947px;top:832px" width="10" height="10" viewBox="0 0 10 10"><path d="M0 0H10L5 10Z" fill="#000"/></svg>
<svg style="left:947px;top:894px" width="10" height="10" viewBox="0 0 10 10"><path d="M0 0H10L5 10Z" fill="#000"/></svg>
<svg width="1553" height="942" viewBox="0 0 1553 942" font-family='"Liberation Sans", sans-serif' font-size="12" fill="#000">
<text x="9.65" y="685.1" font-size="31" fill="#000" textLength="53.29" lengthAdjust="spacingAndGlyphs" stroke="#dbe5e8" stroke-width="0.8">Ch1</text>
<text x="559.88" y="676" font-size="31" fill="#00f80a" textLength="75.02" lengthAdjust="spacingAndGlyphs" stroke="#000" stroke-width="0.45">3.995</text>
<text x="672.82" y="676" font-size="31" fill="#00f80a" textLength="73.53" lengthAdjust="spacingAndGlyphs" stroke="#000" stroke-width="0.45">Vrms</text>
<text x="9.60" y="748.1" font-size="31" fill="#000" textLength="55.19" lengthAdjust="spacingAndGlyphs" stroke="#dbe5e8" stroke-width="0.8">Ch2</text>
<text x="559.88" y="756" font-size="31" fill="#00f80a" textLength="75.02" lengthAdjust="spacingAndGlyphs" stroke="#000" stroke-width="0.45">3.995</text>
<text x="672.82" y="756" font-size="31" fill="#00f80a" textLength="73.53" lengthAdjust="spacingAndGlyphs" stroke="#000" stroke-width="0.45">Vrms</text>
<text x="773.65" y="685.1" font-size="31" fill="#000" textLength="53.29" lengthAdjust="spacingAndGlyphs" stroke="#dbe5e8" stroke-width="0.8">Ch1</text>
<text x="1335.35" y="676" font-size="31" fill="#00f80a" textLength="127.66" lengthAdjust="spacingAndGlyphs" stroke="#000" stroke-width="0.45">0.000079</text>
<text x="1484.73" y="676" font-size="31" fill="#00f80a" textLength="27.22" lengthAdjust="spacingAndGlyphs" stroke="#000" stroke-width="0.45">%</text>
<text x="773.60" y="748.1" font-size="31" fill="#000" textLength="55.19" lengthAdjust="spacingAndGlyphs" stroke="#dbe5e8" stroke-width="0.8">Ch2</text>
<text x="1335.36" y="756" font-size="31" fill="#00f80a" textLength="126.97" lengthAdjust="spacingAndGlyphs" stroke="#000" stroke-width="0.45">0.000083</text>
<text x="1484.73" y="756" font-size="31" fill="#00f80a" textLength="27.22" lengthAdjust="spacingAndGlyphs" stroke="#000" stroke-width="0.45">%</text>
<text x="9.65" y="849.1" font-size="31" fill="#000" textLength="53.29" lengthAdjust="spacingAndGlyphs" stroke="#dbe5e8" stroke-width="0.8">Ch1</text>
<text x="552.94" y="840" font-size="31" fill="#00f80a" textLength="108.71" lengthAdjust="spacingAndGlyphs" stroke="#000" stroke-width="0.45">1.00003</text>
<text x="693.40" y="840" font-size="31" fill="#00f80a" textLength="55.52" lengthAdjust="spacingAndGlyphs" stroke="#000" stroke-width="0.45">kHz</text>
<text x="9.60" y="912.1" font-size="31" fill="#000" textLength="55.19" lengthAdjust="spacingAndGlyphs" stroke="#dbe5e8" stroke-width="0.8">Ch2</text>
<text x="552.94" y="920" font-size="31" fill="#00f80a" textLength="108.71" lengthAdjust="spacingAndGlyphs" stroke="#000" stroke-width="0.45">1.00003</text>
<text x="693.40" y="920" font-size="31" fill="#00f80a" textLength="55.52" lengthAdjust="spacingAndGlyphs" stroke="#000" stroke-width="0.45">kHz</text>
<text x="773.65" y="849.1" font-size="31" fill="#000" textLength="53.29" lengthAdjust="spacingAndGlyphs" stroke="#dbe5e8" stroke-width="0.8">Ch1</text>
<text x="1338.45" y="840" font-size="31" fill="#00f80a" textLength="108.21" lengthAdjust="spacingAndGlyphs" stroke="#000" stroke-width="0.45">122.045</text>
<text x="1472.55" y="840" font-size="31" fill="#00f80a" textLength="38.10" lengthAdjust="spacingAndGlyphs" stroke="#000" stroke-width="0.45">dB</text>
<text x="773.60" y="912.1" font-size="31" fill="#000" textLength="55.19" lengthAdjust="spacingAndGlyphs" stroke="#dbe5e8" stroke-width="0.8">Ch2</text>
<text x="1338.45" y="920" font-size="31" fill="#00f80a" textLength="108.65" lengthAdjust="spacingAndGlyphs" stroke="#000" stroke-width="0.45">121.604</text>
<text x="1472.55" y="920" font-size="31" fill="#00f80a" textLength="38.10" lengthAdjust="spacingAndGlyphs" stroke="#000" stroke-width="0.45">dB</text>
</svg>
</body></html>
